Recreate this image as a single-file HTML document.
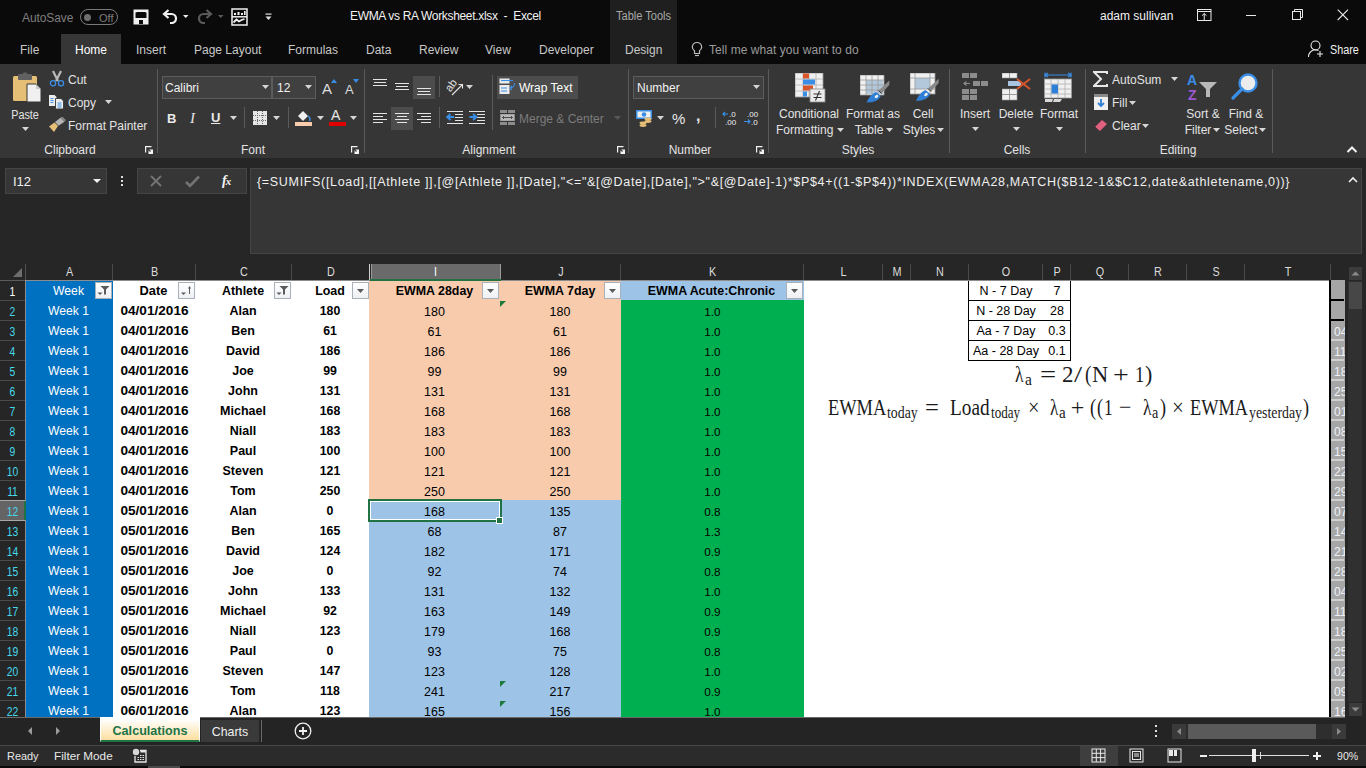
<!DOCTYPE html><html><head><meta charset="utf-8"><style>
*{margin:0;padding:0;box-sizing:border-box}
html,body{width:1366px;height:768px;overflow:hidden;background:#262626;font-family:"Liberation Sans",sans-serif}
.a{position:absolute}
.t{position:absolute;white-space:nowrap;line-height:1}
#title{left:0;top:0;width:1366px;height:64px;background:#0a0a0a}
#ribbon{left:0;top:64px;width:1366px;height:94px;background:#363636}
.ui{color:#e6e6e6;font-size:12px}
.sep{position:absolute;width:1px;background:#5a5a5a}
.lbl{position:absolute;color:#e0e0e0;font-size:12px;white-space:nowrap;line-height:1}
.dd{position:absolute;width:0;height:0;border-left:3px solid transparent;border-right:3px solid transparent;border-top:3px solid #d0d0d0}
.cell{position:absolute;white-space:nowrap;line-height:20px;height:20px;text-align:center;font-size:13px;color:#000}
.fb{position:absolute;width:17px;height:17px;background:linear-gradient(#ffffff,#eef0f4);border:1px solid #a9b0b8}
.ch{position:absolute;top:264px;height:16px;line-height:16px;text-align:center;color:#d6d6d6;font-size:12px;border-right:1px solid #4a4a4a}
.rh{position:absolute;left:0;width:25px;height:20px;line-height:20px;text-align:center;color:#5ad4e6;font-size:12px;border-bottom:1px solid #4a4a4a}
</style></head><body>
<div id="title" class="a"></div>
<div class="a" style="left:610px;top:0;width:67px;height:64px;background:#1f1f1f"></div>
<div class="t" style="left:22px;top:12px;font-size:12px;color:#7e7e7e;letter-spacing:-0.1px">AutoSave</div>
<div class="a" style="left:80px;top:9px;width:38px;height:16px;border:1px solid #7a7a7a;border-radius:8px"></div>
<div class="a" style="left:84px;top:13.5px;width:7px;height:7px;background:#6e6e6e;border-radius:50%"></div>
<div class="t" style="left:99px;top:13px;font-size:11px;color:#7a7a7a">Off</div>
<svg class="a" style="left:133px;top:9px" width="16" height="16" viewBox="0 0 16 16"><path d="M2 1.5 H14.5 V14.5 H1.5 V1.5z" fill="none" stroke="#f0f0f0" stroke-width="2"/><rect x="1" y="1" width="14" height="2.5" fill="#f0f0f0"/><rect x="3.5" y="3" width="9" height="5" fill="#0a0a0a"/><rect x="1" y="9" width="14" height="6" fill="#f0f0f0"/><rect x="6" y="11" width="4" height="4" fill="#0a0a0a"/></svg>
<svg class="a" style="left:162px;top:9px" width="28" height="15" viewBox="0 0 28 15"><path d="M2 5 H9.5 A4.5 4.5 0 0 1 9.5 14 H8" fill="none" stroke="#f0f0f0" stroke-width="2.2"/><path d="M6.5 1 L2 5 L6.5 9" fill="none" stroke="#f0f0f0" stroke-width="2.2"/><path d="M21 6 H26.5 L23.75 9z" fill="#f0f0f0"/></svg>
<svg class="a" style="left:197px;top:9px" width="28" height="15" viewBox="0 0 28 15"><path d="M14 5 H6.5 A4.5 4.5 0 0 0 6.5 14 H8" fill="none" stroke="#5a5a5a" stroke-width="2.2"/><path d="M9.5 1 L14 5 L9.5 9" fill="none" stroke="#5a5a5a" stroke-width="2.2"/><path d="M21 6 H26.5 L23.75 9z" fill="#5a5a5a"/></svg>
<svg class="a" style="left:231px;top:8px" width="17" height="18" viewBox="0 0 17 18"><rect x="1" y="1" width="15" height="16" fill="none" stroke="#f0f0f0" stroke-width="1.5"/><path d="M1 8.8 H16" stroke="#f0f0f0" stroke-width="1.5"/><rect x="3" y="5" width="2" height="2" fill="#f0f0f0"/><rect x="6.5" y="4" width="2" height="3" fill="#f0f0f0"/><rect x="10" y="5" width="2" height="2" fill="#f0f0f0"/><rect x="13" y="3" width="1.6" height="4" fill="#f0f0f0"/><path d="M2.5 14.5 L5.5 11.5 L8 13.5 L10.5 12 L13.5 11" stroke="#f0f0f0" stroke-width="1.8" fill="none"/></svg>
<svg class="a" style="left:265px;top:13px" width="7" height="8" viewBox="0 0 7 8"><rect x="0.5" y="0.5" width="6" height="1.2" fill="#e0e0e0"/><path d="M0.5 3.5 H6.5 L3.5 7z" fill="#e0e0e0"/></svg>
<div class="t" id="ttl" style="left:350px;top:10px;font-size:12px;color:#f2f2f2;letter-spacing:-0.33px">EWMA vs RA Worksheet.xlsx &nbsp;- &nbsp;Excel</div>
<div class="t" style="left:616px;top:10px;font-size:12px;color:#a8a8a8;transform:scaleX(0.92);transform-origin:0 0">Table Tools</div>
<div class="t" style="left:1100px;top:10px;font-size:12px;color:#f2f2f2">adam sullivan</div>
<svg class="a" style="left:1197px;top:9px" width="15" height="12" viewBox="0 0 15 12"><rect x="0.5" y="0.5" width="13.5" height="11" fill="none" stroke="#e8e8e8"/><line x1="0.5" y1="2.5" x2="14" y2="2.5" stroke="#e8e8e8"/><path d="M7.25 4.5 V11 M5 6.7 L7.25 4.5 L9.5 6.7" stroke="#e8e8e8" fill="none"/></svg>
<div class="a" style="left:1246px;top:15px;width:10px;height:1px;background:#e8e8e8"></div>
<svg class="a" style="left:1292px;top:9px" width="11" height="11" viewBox="0 0 11 11"><rect x="0.5" y="2.5" width="8" height="8" fill="none" stroke="#e8e8e8"/><path d="M2.5 2.5 V0.5 H10.5 V8.5 H8.5" fill="none" stroke="#e8e8e8"/></svg>
<svg class="a" style="left:1337px;top:9px" width="12" height="12" viewBox="0 0 12 12"><path d="M0.7 0.7 L11 11 M11 0.7 L0.7 11" stroke="#e8e8e8" stroke-width="1.1"/></svg>
<div class="a" style="left:61px;top:34px;width:60px;height:30px;background:#363636"></div>
<div class="t" style="left:20px;top:44px;font-size:12px;color:#c8c8c8">File</div>
<div class="t" style="left:75px;top:44px;font-size:12px;color:#ffffff">Home</div>
<div class="t" style="left:136px;top:44px;font-size:12px;color:#c8c8c8">Insert</div>
<div class="t" style="left:194px;top:44px;font-size:12px;color:#c8c8c8">Page Layout</div>
<div class="t" style="left:288px;top:44px;font-size:12px;color:#c8c8c8">Formulas</div>
<div class="t" style="left:366px;top:44px;font-size:12px;color:#c8c8c8">Data</div>
<div class="t" style="left:419px;top:44px;font-size:12px;color:#c8c8c8">Review</div>
<div class="t" style="left:485px;top:44px;font-size:12px;color:#c8c8c8">View</div>
<div class="t" style="left:539px;top:44px;font-size:12px;color:#c8c8c8">Developer</div>
<div class="t" style="left:625px;top:44px;font-size:12px;color:#c8c8c8">Design</div>
<svg class="a" style="left:691px;top:41px" width="12" height="17" viewBox="0 0 12 17"><path d="M6 1.5 A4.5 4.5 0 0 1 8.5 9.8 V12.5 H3.5 V9.8 A4.5 4.5 0 0 1 6 1.5z" fill="none" stroke="#bdbdbd" stroke-width="1.2"/><line x1="4" y1="14.5" x2="8" y2="14.5" stroke="#bdbdbd" stroke-width="1.2"/></svg>
<div class="t" style="left:709px;top:44px;font-size:12px;color:#9a9a9a;letter-spacing:0.06px">Tell me what you want to do</div>
<svg class="a" style="left:1307px;top:40px" width="18" height="18" viewBox="0 0 18 18"><circle cx="8.5" cy="5.5" r="4.5" fill="none" stroke="#e8e8e8" stroke-width="1.1"/><path d="M1.5 17 A7 7 0 0 1 11.5 10.5" fill="none" stroke="#e8e8e8" stroke-width="1.1"/><path d="M13 11 V17 M10 14 H16" stroke="#e8e8e8" stroke-width="1.1"/></svg>
<div class="t" style="left:1330px;top:44px;font-size:12px;color:#f2f2f2;transform:scaleX(0.9);transform-origin:0 0">Share</div>
<div id="ribbon" class="a"></div>
<div class="t" style="left:20.0px;top:144px;width:100px;text-align:center;font-size:12px;color:#e3e3e3">Clipboard</div>
<div class="t" style="left:203.0px;top:144px;width:100px;text-align:center;font-size:12px;color:#e3e3e3">Font</div>
<div class="t" style="left:439.0px;top:144px;width:100px;text-align:center;font-size:12px;color:#e3e3e3">Alignment</div>
<div class="t" style="left:640.0px;top:144px;width:100px;text-align:center;font-size:12px;color:#e3e3e3">Number</div>
<div class="t" style="left:808.0px;top:144px;width:100px;text-align:center;font-size:12px;color:#e3e3e3">Styles</div>
<div class="t" style="left:967.0px;top:144px;width:100px;text-align:center;font-size:12px;color:#e3e3e3">Cells</div>
<div class="t" style="left:1128.0px;top:144px;width:100px;text-align:center;font-size:12px;color:#e3e3e3">Editing</div>
<svg class="a" style="left:145px;top:146px" width="9" height="9" viewBox="0 0 9 9"><path d="M0.6 6.5 V0.6 H6.5" fill="none" stroke="#f4f4f4" stroke-width="1.2"/><rect x="3.5" y="3.5" width="4.5" height="4.5" fill="#f4f4f4"/><path d="M2.5 2.5 L5.5 5.5" stroke="#363636" stroke-width="1.2"/></svg>
<svg class="a" style="left:351px;top:146px" width="9" height="9" viewBox="0 0 9 9"><path d="M0.6 6.5 V0.6 H6.5" fill="none" stroke="#f4f4f4" stroke-width="1.2"/><rect x="3.5" y="3.5" width="4.5" height="4.5" fill="#f4f4f4"/><path d="M2.5 2.5 L5.5 5.5" stroke="#363636" stroke-width="1.2"/></svg>
<svg class="a" style="left:617px;top:146px" width="9" height="9" viewBox="0 0 9 9"><path d="M0.6 6.5 V0.6 H6.5" fill="none" stroke="#f4f4f4" stroke-width="1.2"/><rect x="3.5" y="3.5" width="4.5" height="4.5" fill="#f4f4f4"/><path d="M2.5 2.5 L5.5 5.5" stroke="#363636" stroke-width="1.2"/></svg>
<svg class="a" style="left:756px;top:146px" width="9" height="9" viewBox="0 0 9 9"><path d="M0.6 6.5 V0.6 H6.5" fill="none" stroke="#f4f4f4" stroke-width="1.2"/><rect x="3.5" y="3.5" width="4.5" height="4.5" fill="#f4f4f4"/><path d="M2.5 2.5 L5.5 5.5" stroke="#363636" stroke-width="1.2"/></svg>
<div class="sep" style="left:157px;top:69px;height:84px"></div>
<div class="sep" style="left:364px;top:69px;height:84px"></div>
<div class="sep" style="left:628px;top:69px;height:84px"></div>
<div class="sep" style="left:768px;top:69px;height:84px"></div>
<div class="sep" style="left:949px;top:69px;height:84px"></div>
<div class="sep" style="left:1085px;top:69px;height:84px"></div>
<div class="sep" style="left:1272px;top:69px;height:84px"></div>
<svg class="a" style="left:1346px;top:145px" width="12" height="8" viewBox="0 0 12 8"><path d="M1.5 7 L6 2.5 L10.5 7" fill="none" stroke="#f0f0f0" stroke-width="2"/></svg>
<svg class="a" style="left:11px;top:71px" width="32" height="33" viewBox="0 0 32 33"><rect x="2" y="5" width="24" height="25" rx="1.5" fill="#e6bf77"/><rect x="7" y="3" width="14" height="6" rx="1" fill="#606060"/><rect x="12" y="1.5" width="4" height="3" rx="1" fill="#606060"/><path d="M16 13 H25 L30 18 V31 H16z" fill="#f0f0f0" stroke="#363636" stroke-width="1"/><path d="M25 13 V18 H30" fill="#c8c8c8"/></svg>
<div class="t" style="left:5px;top:109px;width:40px;text-align:center;font-size:12px;color:#e3e3e3;transform:scaleX(0.9)">Paste</div>
<svg class="a" style="left:21.5px;top:127px" width="7" height="4" viewBox="0 0 7 4"><path d="M0 0 H7 L3.5 4z" fill="#d6d6d6"/></svg>
<svg class="a" style="left:49px;top:70px" width="16" height="17" viewBox="0 0 16 17"><path d="M4 1 L9 11 M12 1 L7 11" stroke="#b8b8b8" stroke-width="2.2"/><circle cx="4" cy="13.3" r="2.6" fill="none" stroke="#3a8ee6" stroke-width="1.3"/><circle cx="12" cy="13.3" r="2.6" fill="none" stroke="#3a8ee6" stroke-width="1.3"/></svg>
<div class="t" style="left:68px;top:74px;font-size:12px;color:#e3e3e3;">Cut</div>
<svg class="a" style="left:48px;top:94px" width="17" height="16" viewBox="0 0 17 16"><path d="M1 1 H6.5 L8.5 3 V12 H1z" fill="#ececec"/><path d="M2.5 4.5 H5.5 M2.5 6.5 H5.5 M2.5 8.5 H5.5" stroke="#3a8ee6" stroke-width="1"/><path d="M7.5 4.5 H13 L15.5 7 V15 H7.5z" fill="#ececec" stroke="#363636" stroke-width="0.9"/><path d="M9.5 9 H13.5 M9.5 11 H13.5 M9.5 13 H13.5" stroke="#3a8ee6" stroke-width="1"/></svg>
<div class="t" style="left:68px;top:97px;font-size:12px;color:#e3e3e3;">Copy</div>
<svg class="a" style="left:104.5px;top:100px" width="7" height="4" viewBox="0 0 7 4"><path d="M0 0 H7 L3.5 4z" fill="#d6d6d6"/></svg>
<svg class="a" style="left:48px;top:117px" width="18" height="16" viewBox="0 0 18 16"><path d="M1 9.5 L6.5 5.5 L10 9 L6 15z" fill="#e6bf77"/><path d="M7 5 L12.5 0.8 L16.5 4.8 L10.5 8.8z" fill="#b4b4b4"/><path d="M12.5 0.8 L14.2 -0.5 L17.8 3 L16.5 4.8z" fill="#8a8a8a"/></svg>
<div class="t" style="left:68px;top:120px;font-size:12px;color:#e3e3e3;">Format Painter</div>
<div class="a" style="left:162px;top:76px;width:110px;height:23px;background:#404040;border:1px solid #5c5c5c"></div>
<div class="a" style="left:272px;top:76px;width:44px;height:23px;background:#404040;border:1px solid #5c5c5c"></div>
<div class="t" style="left:165px;top:82px;font-size:12px;color:#f0f0f0;">Calibri</div>
<div class="t" style="left:277px;top:82px;font-size:12px;color:#f0f0f0;">12</div>
<svg class="a" style="left:261.5px;top:85px" width="7" height="4" viewBox="0 0 7 4"><path d="M0 0 H7 L3.5 4z" fill="#d6d6d6"/></svg>
<svg class="a" style="left:304.5px;top:85px" width="7" height="4" viewBox="0 0 7 4"><path d="M0 0 H7 L3.5 4z" fill="#d6d6d6"/></svg>
<div class="t" style="left:322px;top:81px;font-size:15px;color:#dcdcdc">A</div>
<svg class="a" style="left:331px;top:79px" width="6" height="4" viewBox="0 0 6 4"><path d="M0 4 H6 L3 0z" fill="#3a8ee6"/></svg>
<div class="t" style="left:345px;top:83px;font-size:13px;color:#dcdcdc">A</div>
<svg class="a" style="left:353px;top:79px" width="6" height="4" viewBox="0 0 6 4"><path d="M0 0 H6 L3 4z" fill="#3a8ee6"/></svg>
<div class="t" style="left:167px;top:112px;font-size:13px;font-weight:bold;color:#e8e8e8">B</div>
<div class="t" style="left:190px;top:111px;font-size:15px;font-style:italic;font-family:'Liberation Serif',serif;color:#e8e8e8">I</div>
<div class="t" style="left:211px;top:111px;font-size:13px;font-weight:bold;color:#e8e8e8;text-decoration:underline">U</div>
<svg class="a" style="left:229.5px;top:116px" width="7" height="4" viewBox="0 0 7 4"><path d="M0 0 H7 L3.5 4z" fill="#d6d6d6"/></svg>
<div class="sep" style="left:244px;top:107px;height:21px"></div>
<svg class="a" style="left:253px;top:111px" width="14" height="14" viewBox="0 0 14 14"><rect x="0" y="0" width="14" height="14" fill="#e6e6e6"/><path d="M4.5 0 V14 M9.5 0 V14 M0 4.5 H14 M0 9.5 H14" stroke="#6a6a6a" stroke-width="1" stroke-dasharray="1 1"/></svg>
<svg class="a" style="left:272.5px;top:116px" width="7" height="4" viewBox="0 0 7 4"><path d="M0 0 H7 L3.5 4z" fill="#d6d6d6"/></svg>
<div class="sep" style="left:288px;top:107px;height:21px"></div>
<svg class="a" style="left:295px;top:109px" width="17" height="18" viewBox="0 0 17 18"><path d="M3 7 L8 2 L13 7 L8 12z" fill="#f0f0f0"/><path d="M13 7 Q16 9 14.5 12" fill="none" stroke="#3a8ee6" stroke-width="1.5"/><rect x="0" y="13" width="17" height="4" fill="#f8cbad"/></svg>
<svg class="a" style="left:316.5px;top:116px" width="7" height="4" viewBox="0 0 7 4"><path d="M0 0 H7 L3.5 4z" fill="#d6d6d6"/></svg>
<div class="t" style="left:331px;top:108px;font-size:14px;color:#e8e8e8">A</div>
<div class="a" style="left:329px;top:122px;width:17px;height:4px;background:#e00000"></div>
<svg class="a" style="left:349.5px;top:116px" width="7" height="4" viewBox="0 0 7 4"><path d="M0 0 H7 L3.5 4z" fill="#d6d6d6"/></svg>
<div class="a" style="left:373px;top:79px;width:14px;height:1px;background:#e4e4e4"></div>
<div class="a" style="left:374px;top:82px;width:12px;height:1px;background:#e4e4e4"></div>
<div class="a" style="left:373px;top:85px;width:14px;height:1px;background:#e4e4e4"></div>
<div class="a" style="left:395px;top:83px;width:14px;height:1px;background:#e4e4e4"></div>
<div class="a" style="left:396px;top:86px;width:12px;height:1px;background:#e4e4e4"></div>
<div class="a" style="left:395px;top:89px;width:14px;height:1px;background:#e4e4e4"></div>
<div class="a" style="left:413px;top:76px;width:22px;height:23px;background:#4c4c4c"></div>
<div class="a" style="left:417px;top:88px;width:14px;height:1px;background:#e4e4e4"></div>
<div class="a" style="left:418px;top:91px;width:12px;height:1px;background:#e4e4e4"></div>
<div class="a" style="left:417px;top:94px;width:14px;height:1px;background:#e4e4e4"></div>
<div class="sep" style="left:439px;top:76px;height:21px"></div>
<svg class="a" style="left:446px;top:78px" width="20" height="19" viewBox="0 0 20 19"><text x="0" y="0" font-size="11" fill="#e4e4e4" font-family="Liberation Sans" transform="translate(4.5 14.5) rotate(-55)">ab</text><path d="M6 17 L16 7 M12.5 6.5 H16.5 V10.5" fill="none" stroke="#e4e4e4" stroke-width="1.1"/></svg>
<svg class="a" style="left:465.5px;top:85px" width="7" height="4" viewBox="0 0 7 4"><path d="M0 0 H7 L3.5 4z" fill="#d6d6d6"/></svg>
<div class="sep" style="left:492px;top:75px;height:55px"></div>
<div class="a" style="left:497px;top:76px;width:81px;height:23px;background:#4c4c4c"></div>
<svg class="a" style="left:499px;top:78px" width="17" height="17" viewBox="0 0 17 17"><rect x="0.5" y="0.5" width="10" height="5" fill="#ececec"/><path d="M2 2.5 H14" stroke="#3a8ee6" stroke-width="1.1"/><rect x="0.5" y="7" width="10" height="9" fill="#ececec"/><path d="M2 10 H8 M2 13 H8" stroke="#3a8ee6" stroke-width="1.1"/><path d="M15.5 5 Q15.5 10 11 10 M13 8 L11 10 L13 12" fill="none" stroke="#3a8ee6" stroke-width="1.1"/></svg>
<div class="t" style="left:519px;top:82px;font-size:12px;color:#ffffff;">Wrap Text</div>
<div class="a" style="left:373px;top:113px;width:14px;height:1px;background:#e4e4e4"></div>
<div class="a" style="left:373px;top:116px;width:10px;height:1px;background:#e4e4e4"></div>
<div class="a" style="left:373px;top:119px;width:14px;height:1px;background:#e4e4e4"></div>
<div class="a" style="left:373px;top:122px;width:10px;height:1px;background:#e4e4e4"></div>
<div class="a" style="left:391px;top:107px;width:22px;height:23px;background:#4c4c4c"></div>
<div class="a" style="left:395px;top:113px;width:14px;height:1px;background:#e4e4e4"></div>
<div class="a" style="left:397px;top:116px;width:10px;height:1px;background:#e4e4e4"></div>
<div class="a" style="left:395px;top:119px;width:14px;height:1px;background:#e4e4e4"></div>
<div class="a" style="left:397px;top:122px;width:10px;height:1px;background:#e4e4e4"></div>
<div class="a" style="left:417px;top:113px;width:14px;height:1px;background:#e4e4e4"></div>
<div class="a" style="left:421px;top:116px;width:10px;height:1px;background:#e4e4e4"></div>
<div class="a" style="left:417px;top:119px;width:14px;height:1px;background:#e4e4e4"></div>
<div class="a" style="left:421px;top:122px;width:10px;height:1px;background:#e4e4e4"></div>
<div class="sep" style="left:439px;top:107px;height:21px"></div>
<div class="a" style="left:447px;top:111px;width:16px;height:1px;background:#e4e4e4"></div>
<div class="a" style="left:455px;top:114px;width:8px;height:1px;background:#e4e4e4"></div>
<div class="a" style="left:455px;top:117px;width:8px;height:1px;background:#e4e4e4"></div>
<div class="a" style="left:455px;top:120px;width:8px;height:1px;background:#e4e4e4"></div>
<div class="a" style="left:447px;top:123px;width:16px;height:1px;background:#e4e4e4"></div>
<svg class="a" style="left:446px;top:113px" width="9" height="8" viewBox="0 0 9 8"><path d="M8 4 H2.5 M4.5 1 L1 4 L4.5 7" stroke="#3a8ee6" stroke-width="1.8" fill="none"/></svg>
<div class="a" style="left:469px;top:111px;width:16px;height:1px;background:#e4e4e4"></div>
<div class="a" style="left:477px;top:114px;width:8px;height:1px;background:#e4e4e4"></div>
<div class="a" style="left:477px;top:117px;width:8px;height:1px;background:#e4e4e4"></div>
<div class="a" style="left:477px;top:120px;width:8px;height:1px;background:#e4e4e4"></div>
<div class="a" style="left:469px;top:123px;width:16px;height:1px;background:#e4e4e4"></div>
<svg class="a" style="left:469px;top:113px" width="9" height="8" viewBox="0 0 9 8"><path d="M0.5 4 H6 M4 1 L7.5 4 L4 7" stroke="#3a8ee6" stroke-width="1.8" fill="none"/></svg>
<svg class="a" style="left:500px;top:110px" width="15" height="15" viewBox="0 0 15 15"><rect x="0" y="0" width="15" height="15" fill="#8c8c8c"/><path d="M7.5 0 V3 M7.5 12 V15 M0 3.5 H15 M0 11.5 H15" stroke="#363636" stroke-width="1"/><rect x="1" y="4.5" width="13" height="6" fill="#b8b8b8"/><path d="M2.5 7.5 H12.5 M4 6 L2.5 7.5 L4 9 M11 6 L12.5 7.5 L11 9" stroke="#4a4a4a" fill="none"/></svg>
<div class="t" style="left:519px;top:113px;font-size:12px;color:#7c7c7c;">Merge &amp; Center</div>
<svg class="a" style="left:613.5px;top:116px" width="7" height="4" viewBox="0 0 7 4"><path d="M0 0 H7 L3.5 4z" fill="#585858"/></svg>
<div class="a" style="left:633px;top:76px;width:131px;height:23px;background:#404040;border:1px solid #5c5c5c"></div>
<div class="t" style="left:637px;top:82px;font-size:12px;color:#f0f0f0;">Number</div>
<svg class="a" style="left:752.5px;top:85px" width="7" height="4" viewBox="0 0 7 4"><path d="M0 0 H7 L3.5 4z" fill="#d6d6d6"/></svg>
<svg class="a" style="left:636px;top:109px" width="17" height="18" viewBox="0 0 17 18"><rect x="0" y="1" width="16" height="9" fill="#3a8ee6"/><rect x="1.5" y="2.5" width="13" height="6" fill="#f0f0f0"/><circle cx="8" cy="5.5" r="2.3" fill="#3a8ee6"/><ellipse cx="12" cy="10" rx="3.5" ry="1.4" fill="#e6bf77"/><ellipse cx="12" cy="12.5" rx="3.5" ry="1.4" fill="#e6bf77"/><ellipse cx="7" cy="14" rx="3.5" ry="1.4" fill="#e6bf77"/><ellipse cx="7" cy="16.5" rx="3.5" ry="1.4" fill="#e6bf77"/></svg>
<svg class="a" style="left:656.5px;top:116px" width="7" height="4" viewBox="0 0 7 4"><path d="M0 0 H7 L3.5 4z" fill="#d6d6d6"/></svg>
<div class="t" style="left:672px;top:111px;font-size:15px;color:#e8e8e8">%</div>
<div class="t" style="left:696px;top:108px;font-size:16px;font-weight:bold;color:#e8e8e8">,</div>
<div class="sep" style="left:715px;top:107px;height:21px"></div>
<svg class="a" style="left:722px;top:110px" width="16" height="15" viewBox="0 0 16 15"><path d="M1 4 H6 M3 2 L1 4 L3 6" stroke="#3a8ee6" stroke-width="1.2" fill="none"/><text x="7" y="7" font-size="8" fill="#f0f0f0" font-family="Liberation Sans">.0</text><text x="3" y="14.5" font-size="8" fill="#f0f0f0" font-family="Liberation Sans">.00</text></svg>
<svg class="a" style="left:744px;top:110px" width="16" height="15" viewBox="0 0 16 15"><text x="3" y="7" font-size="8" fill="#f0f0f0" font-family="Liberation Sans">.00</text><path d="M0 11.5 H6 M4 9.5 L6 11.5 L4 13.5" stroke="#3a8ee6" stroke-width="1.2" fill="none"/><text x="7" y="14.5" font-size="8" fill="#f0f0f0" font-family="Liberation Sans">.0</text></svg>
<svg class="a" style="left:795px;top:73px" width="31" height="30" viewBox="0 0 31 30"><rect x="0" y="0" width="28" height="24" fill="#f0f0f0" stroke="#9a9a9a" stroke-width="0.8"/><path d="M0 6 H28 M0 12 H28 M0 18 H28 M8 0 V24 M14 0 V24 M21 0 V24" stroke="#b0b0b0" stroke-width="0.8"/><rect x="8" y="0.5" width="6" height="5" fill="#d9552b"/><rect x="8" y="6.5" width="12" height="5" fill="#3a8ee6"/><rect x="8" y="12.5" width="10" height="5" fill="#d9552b"/><rect x="8" y="18.5" width="4" height="5" fill="#3a8ee6"/><rect x="15" y="16" width="15" height="13" fill="#ececec" stroke="#8a8a8a" stroke-width="0.8"/><path d="M18.5 21 H26.5 M18.5 24.5 H26.5 M20.5 27.5 L24.5 18" stroke="#303030" stroke-width="1.1" fill="none"/></svg>
<div class="t" style="left:764.0px;top:108px;width:90px;text-align:center;font-size:12px;color:#e3e3e3">Conditional</div>
<div class="t" style="left:776px;top:124px;font-size:12px;color:#e3e3e3;">Formatting</div>
<svg class="a" style="left:836.5px;top:128px" width="7" height="4" viewBox="0 0 7 4"><path d="M0 0 H7 L3.5 4z" fill="#d6d6d6"/></svg>
<svg class="a" style="left:860px;top:75px" width="30" height="28" viewBox="0 0 30 28"><rect x="0" y="0" width="24" height="20" fill="#f0f0f0" stroke="#9a9a9a" stroke-width="0.8"/><rect x="6" y="5" width="17" height="14" fill="#b4c8dc"/><path d="M0 5 H24 M0 10 H24 M0 15 H24 M6 0 V20 M12 0 V20 M18 0 V20" stroke="#9a9a9a" stroke-width="0.8"/><path d="M29.3 5.5 V10 L21.5 18.5 L18.5 15.5z" fill="#8a8a8a"/><path d="M18.5 15.5 L21.5 18.5" stroke="#363636" stroke-width="1"/><path d="M6.6 27.6 Q9.5 20 16 17 L20.8 21 Q18 27.6 6.6 27.6z" fill="#2f7fd6"/><ellipse cx="16.5" cy="21.5" rx="2" ry="1.4" fill="#f0f0f0" transform="rotate(-40 16.5 21.5)"/></svg>
<div class="t" style="left:833.0px;top:108px;width:80px;text-align:center;font-size:12px;color:#e3e3e3">Format as</div>
<div class="t" style="left:839.0px;top:124px;width:60px;text-align:center;font-size:12px;color:#e3e3e3">Table</div>
<svg class="a" style="left:885.5px;top:128px" width="7" height="4" viewBox="0 0 7 4"><path d="M0 0 H7 L3.5 4z" fill="#d6d6d6"/></svg>
<svg class="a" style="left:910px;top:73px" width="30" height="29" viewBox="0 0 30 29"><rect x="0" y="0" width="25" height="21" fill="#f0f0f0" stroke="#9a9a9a" stroke-width="0.8"/><rect x="5" y="5" width="15" height="11" fill="#b4c8dc"/><path d="M0 5 H25 M0 16 H25 M5 0 V21 M20 0 V21" stroke="#9a9a9a" stroke-width="0.8"/><path d="M28.7 5.8 V10 L21 18.5 L18 15.5z" fill="#8a8a8a"/><path d="M18 15.5 L21 18.5" stroke="#363636" stroke-width="1"/><path d="M6 27.9 Q9 20 15.5 17 L20.2 21 Q17.5 27.9 6 27.9z" fill="#2f7fd6"/><ellipse cx="16" cy="21.5" rx="2" ry="1.4" fill="#f0f0f0" transform="rotate(-40 16 21.5)"/></svg>
<div class="t" style="left:903.0px;top:108px;width:40px;text-align:center;font-size:12px;color:#e3e3e3">Cell</div>
<div class="t" style="left:894.0px;top:124px;width:50px;text-align:center;font-size:12px;color:#e3e3e3">Styles</div>
<svg class="a" style="left:936.5px;top:128px" width="7" height="4" viewBox="0 0 7 4"><path d="M0 0 H7 L3.5 4z" fill="#d6d6d6"/></svg>
<svg class="a" style="left:962px;top:73px" width="27" height="28" viewBox="0 0 27 28"><rect x="0" y="0" width="15" height="5" fill="#8c8c8c"/><path d="M7.5 0 V5" stroke="#363636"/><rect x="11" y="8" width="15" height="5" fill="#8c8c8c"/><path d="M18.5 8 V13" stroke="#363636"/><path d="M2 10.5 H8 M4.5 8.5 L2 10.5 L4.5 12.5" stroke="#8c8c8c" stroke-width="1.2" fill="none"/><rect x="0" y="16" width="15" height="11" fill="#8c8c8c"/><path d="M7.5 16 V27 M0 21.5 H15" stroke="#363636"/></svg>
<div class="t" style="left:945.0px;top:108px;width:60px;text-align:center;font-size:12px;color:#e3e3e3">Insert</div>
<svg class="a" style="left:971.5px;top:127px" width="7" height="4" viewBox="0 0 7 4"><path d="M0 0 H7 L3.5 4z" fill="#d6d6d6"/></svg>
<svg class="a" style="left:1002px;top:73px" width="32" height="28" viewBox="0 0 32 28"><rect x="0" y="0" width="15" height="5" fill="#f0f0f0" stroke="#9a9a9a" stroke-width="0.6"/><path d="M7.5 0 V5" stroke="#9a9a9a"/><rect x="6" y="8" width="13" height="5" fill="#a8c4e0"/><rect x="0" y="16" width="15" height="11" fill="#f0f0f0" stroke="#9a9a9a" stroke-width="0.6"/><path d="M7.5 16 V27 M0 21.5 H15" stroke="#9a9a9a"/><path d="M15 6 L28 16 M28 6 L15 16" stroke="#d9552b" stroke-width="2"/></svg>
<div class="t" style="left:986.0px;top:108px;width:60px;text-align:center;font-size:12px;color:#e3e3e3">Delete</div>
<svg class="a" style="left:1012.5px;top:127px" width="7" height="4" viewBox="0 0 7 4"><path d="M0 0 H7 L3.5 4z" fill="#d6d6d6"/></svg>
<svg class="a" style="left:1044px;top:72px" width="29" height="31" viewBox="0 0 29 31"><path d="M1 3 H27 M1 0.5 V5.5 M27 0.5 V5.5 M4 1 L1 3 L4 5 M24 1 L27 3 L24 5" stroke="#3a8ee6" stroke-width="1.1" fill="none"/><rect x="0.5" y="7" width="27" height="19" fill="#f0f0f0" stroke="#9a9a9a" stroke-width="0.8"/><path d="M0.5 12 H27.5 M0.5 17 H27.5 M0.5 22 H27.5 M7 7 V26 M14 7 V26 M21 7 V26" stroke="#b0b0b0" stroke-width="0.8"/><rect x="7.5" y="12.5" width="6.5" height="9" fill="#2f7fd6"/><path d="M1 27 H9 L8 30 H1z M10 27 H18 L16 30 H9z" fill="#d8d8d8"/></svg>
<div class="t" style="left:1029.0px;top:108px;width:60px;text-align:center;font-size:12px;color:#e3e3e3">Format</div>
<svg class="a" style="left:1055.5px;top:127px" width="7" height="4" viewBox="0 0 7 4"><path d="M0 0 H7 L3.5 4z" fill="#d6d6d6"/></svg>
<svg class="a" style="left:1093px;top:71px" width="15" height="16" viewBox="0 0 15 16"><path d="M14 3 V1 H1 L8 8 L1 15 H14 V13" fill="none" stroke="#e8e8e8" stroke-width="2"/></svg>
<div class="t" style="left:1112px;top:74px;font-size:12px;color:#e3e3e3;">AutoSum</div>
<svg class="a" style="left:1170.5px;top:77px" width="7" height="4" viewBox="0 0 7 4"><path d="M0 0 H7 L3.5 4z" fill="#d6d6d6"/></svg>
<svg class="a" style="left:1094px;top:94px" width="14" height="16" viewBox="0 0 14 16"><rect x="0" y="0" width="14" height="16" fill="#f0f0f0"/><rect x="0" y="0" width="14" height="3" fill="#8a8a8a"/><path d="M7 5 V12 M4 9 L7 12 L10 9" stroke="#2f7fd6" stroke-width="1.8" fill="none"/></svg>
<div class="t" style="left:1112px;top:97px;font-size:12px;color:#e3e3e3;">Fill</div>
<svg class="a" style="left:1128.5px;top:101px" width="7" height="4" viewBox="0 0 7 4"><path d="M0 0 H7 L3.5 4z" fill="#d6d6d6"/></svg>
<svg class="a" style="left:1094px;top:118px" width="14" height="14" viewBox="0 0 14 14"><path d="M1 9 L8 2 L13 6 L6 13z" fill="#e0607e"/><path d="M1 9 L4 12" stroke="#363636"/></svg>
<div class="t" style="left:1112px;top:120px;font-size:12px;color:#e3e3e3;">Clear</div>
<svg class="a" style="left:1141.5px;top:124px" width="7" height="4" viewBox="0 0 7 4"><path d="M0 0 H7 L3.5 4z" fill="#d6d6d6"/></svg>
<svg class="a" style="left:1187px;top:73px" width="31" height="28" viewBox="0 0 31 28"><text x="0" y="12" font-size="14" font-weight="bold" font-family="Liberation Sans" fill="#3a8ee6">A</text><text x="1" y="27" font-size="14" font-weight="bold" font-family="Liberation Sans" fill="#9b59d0">Z</text><path d="M12 9 H30 L23 16 V24 H19 V16z" fill="#b8b8b8"/></svg>
<div class="t" style="left:1178.0px;top:108px;width:50px;text-align:center;font-size:12px;color:#e3e3e3">Sort &amp;</div>
<div class="t" style="left:1173.0px;top:124px;width:50px;text-align:center;font-size:12px;color:#e3e3e3">Filter</div>
<svg class="a" style="left:1212.5px;top:128px" width="7" height="4" viewBox="0 0 7 4"><path d="M0 0 H7 L3.5 4z" fill="#d6d6d6"/></svg>
<svg class="a" style="left:1231px;top:72px" width="29" height="29" viewBox="0 0 29 29"><circle cx="17" cy="11" r="8.5" fill="#ececec" stroke="#3a8ee6" stroke-width="2.4"/><path d="M11 17 L2 26" stroke="#3a8ee6" stroke-width="3.2" stroke-linecap="round"/></svg>
<div class="t" style="left:1221.0px;top:108px;width:50px;text-align:center;font-size:12px;color:#e3e3e3">Find &amp;</div>
<div class="t" style="left:1216.0px;top:124px;width:50px;text-align:center;font-size:12px;color:#e3e3e3">Select</div>
<svg class="a" style="left:1258.5px;top:128px" width="7" height="4" viewBox="0 0 7 4"><path d="M0 0 H7 L3.5 4z" fill="#d6d6d6"/></svg>
<div class="a" style="left:5px;top:168px;width:102px;height:26px;background:#363636;border:1px solid #454545"></div>
<div class="t" style="left:13px;top:175px;font-size:13px;color:#f0f0f0">I12</div>
<div class="dd" style="left:93px;top:179px;border-left-width:4px;border-right-width:4px;border-top-width:4px;border-top-color:#f0f0f0"></div>
<div class="a" style="left:121px;top:176px;width:2px;height:2px;background:#e0e0e0"></div>
<div class="a" style="left:121px;top:180px;width:2px;height:2px;background:#e0e0e0"></div>
<div class="a" style="left:121px;top:184px;width:2px;height:2px;background:#e0e0e0"></div>
<div class="a" style="left:137px;top:168px;width:110px;height:26px;background:#363636;border:1px solid #454545"></div>
<svg class="a" style="left:150px;top:175px" width="12" height="12" viewBox="0 0 12 12"><path d="M1 1 L11 11 M11 1 L1 11" stroke="#747474" stroke-width="1.8"/></svg>
<svg class="a" style="left:185px;top:175px" width="15" height="13" viewBox="0 0 15 13"><path d="M1 7 L5 11 L14 1.5" fill="none" stroke="#747474" stroke-width="2.6"/></svg>
<div class="t" style="left:222px;top:174px;font-size:14px;font-family:'Liberation Serif',serif;font-style:italic;font-weight:bold;color:#f4f4f4">f<span style="font-size:11px;margin-left:-1px">x</span></div>
<div class="a" style="left:250px;top:168px;width:1112px;height:86px;background:#363636;border:1px solid #454545"></div>
<div class="t" id="formula" style="left:257px;top:175.5px;font-size:12.5px;letter-spacing:0.675px;color:#f0f0f0">{=SUMIFS([Load],[[Athlete ]],[@[Athlete ]],[Date],"&lt;="&amp;[@Date],[Date],"&gt;"&amp;[@Date]-1)*$P$4+((1-$P$4))*INDEX(EWMA28,MATCH($B12-1&amp;$C12,date&amp;athletename,0))}</div>
<svg class="a" style="left:1348px;top:176px" width="10" height="7" viewBox="0 0 10 7"><path d="M1 6 L5 2 L9 6" fill="none" stroke="#f0f0f0" stroke-width="1.6"/></svg>
<div class="a" style="left:26px;top:281px;width:1305px;height:436px;background:#ffffff"></div>
<div class="a" style="left:0;top:264px;width:1345px;height:17px;background:#262626"></div>
<div class="a" style="left:0;top:280px;width:25px;height:1px;background:#5c5c5c"></div>
<div class="a" style="left:25px;top:280px;width:1306px;height:1px;background:#8c8c8c"></div>
<svg class="a" style="left:13px;top:268px" width="9" height="9" viewBox="0 0 9 9"><path d="M9 0 L9 9 L0 9z" fill="#6e6e6e"/></svg>
<div class="a" style="left:25px;top:264px;width:1px;height:16px;background:#505050"></div>
<div class="a" style="left:25px;top:280px;width:1px;height:437px;background:#8c8c8c"></div>
<div class="a" style="left:112px;top:264px;width:1px;height:16px;background:#4a4a4a"></div>
<div class="t" style="left:26px;top:266px;width:87px;text-align:center;font-size:12px;color:#dcdcdc;transform:scaleX(0.9)">A</div>
<div class="a" style="left:195px;top:264px;width:1px;height:16px;background:#4a4a4a"></div>
<div class="t" style="left:113px;top:266px;width:83px;text-align:center;font-size:12px;color:#dcdcdc;transform:scaleX(0.9)">B</div>
<div class="a" style="left:291px;top:264px;width:1px;height:16px;background:#4a4a4a"></div>
<div class="t" style="left:196px;top:266px;width:96px;text-align:center;font-size:12px;color:#dcdcdc;transform:scaleX(0.9)">C</div>
<div class="a" style="left:369px;top:264px;width:1px;height:16px;background:#4a4a4a"></div>
<div class="t" style="left:292px;top:266px;width:78px;text-align:center;font-size:12px;color:#dcdcdc;transform:scaleX(0.9)">D</div>
<div class="a" style="left:371px;top:264px;width:130px;height:16px;background:#6a6a6a;border-left:1px solid #9a9a9a;border-right:1px solid #9a9a9a"></div>
<div class="a" style="left:370px;top:279px;width:131px;height:2px;background:#217346"></div>
<div class="a" style="left:369px;top:264px;width:1px;height:16px;background:#d0d0d0"></div>
<div class="t" style="left:370px;top:266px;width:131px;text-align:center;font-size:12px;color:#ffffff;transform:scaleX(0.9)">I</div>
<div class="a" style="left:620px;top:264px;width:1px;height:16px;background:#4a4a4a"></div>
<div class="t" style="left:501px;top:266px;width:120px;text-align:center;font-size:12px;color:#dcdcdc;transform:scaleX(0.9)">J</div>
<div class="a" style="left:803px;top:264px;width:1px;height:16px;background:#4a4a4a"></div>
<div class="t" style="left:621px;top:266px;width:183px;text-align:center;font-size:12px;color:#dcdcdc;transform:scaleX(0.9)">K</div>
<div class="a" style="left:882px;top:264px;width:1px;height:16px;background:#4a4a4a"></div>
<div class="t" style="left:804px;top:266px;width:79px;text-align:center;font-size:12px;color:#dcdcdc;transform:scaleX(0.9)">L</div>
<div class="a" style="left:910px;top:264px;width:1px;height:16px;background:#4a4a4a"></div>
<div class="t" style="left:883px;top:266px;width:28px;text-align:center;font-size:12px;color:#dcdcdc;transform:scaleX(0.9)">M</div>
<div class="a" style="left:968px;top:264px;width:1px;height:16px;background:#4a4a4a"></div>
<div class="t" style="left:911px;top:266px;width:58px;text-align:center;font-size:12px;color:#dcdcdc;transform:scaleX(0.9)">N</div>
<div class="a" style="left:1042px;top:264px;width:1px;height:16px;background:#4a4a4a"></div>
<div class="t" style="left:969px;top:266px;width:74px;text-align:center;font-size:12px;color:#dcdcdc;transform:scaleX(0.9)">O</div>
<div class="a" style="left:1070px;top:264px;width:1px;height:16px;background:#4a4a4a"></div>
<div class="t" style="left:1043px;top:266px;width:28px;text-align:center;font-size:12px;color:#dcdcdc;transform:scaleX(0.9)">P</div>
<div class="a" style="left:1128px;top:264px;width:1px;height:16px;background:#4a4a4a"></div>
<div class="t" style="left:1071px;top:266px;width:58px;text-align:center;font-size:12px;color:#dcdcdc;transform:scaleX(0.9)">Q</div>
<div class="a" style="left:1186px;top:264px;width:1px;height:16px;background:#4a4a4a"></div>
<div class="t" style="left:1129px;top:266px;width:58px;text-align:center;font-size:12px;color:#dcdcdc;transform:scaleX(0.9)">R</div>
<div class="a" style="left:1244px;top:264px;width:1px;height:16px;background:#4a4a4a"></div>
<div class="t" style="left:1187px;top:266px;width:58px;text-align:center;font-size:12px;color:#dcdcdc;transform:scaleX(0.9)">S</div>
<div class="a" style="left:1330px;top:264px;width:1px;height:16px;background:#4a4a4a"></div>
<div class="t" style="left:1245px;top:266px;width:86px;text-align:center;font-size:12px;color:#dcdcdc;transform:scaleX(0.9)">T</div>
<div class="a" style="left:26px;top:281px;width:87px;height:436px;background:#0070c0"></div>
<div class="a" style="left:369px;top:281px;width:252px;height:219px;background:#f8cbad"></div>
<div class="a" style="left:369px;top:500px;width:252px;height:217px;background:#9dc3e6"></div>
<div class="a" style="left:621px;top:281px;width:183px;height:19px;background:#9dc3e6"></div>
<div class="a" style="left:621px;top:300px;width:183px;height:417px;background:#00b050"></div>
<div class="a" style="left:0;top:281px;width:25px;height:20px;background:#262626;overflow:hidden"><div class="t" style="left:0;top:5px;width:25px;text-align:center;font-size:12px;color:#ffffff;transform:scaleX(0.86)">1</div></div>
<div class="a" style="left:0;top:300px;width:25px;height:1px;background:#4a4a4a"></div>
<div class="a" style="left:0;top:301px;width:25px;height:20px;background:#262626;overflow:hidden"><div class="t" style="left:0;top:5px;width:25px;text-align:center;font-size:12px;color:#45d9ec;transform:scaleX(0.86)">2</div></div>
<div class="a" style="left:0;top:320px;width:25px;height:1px;background:#4a4a4a"></div>
<div class="a" style="left:0;top:321px;width:25px;height:20px;background:#262626;overflow:hidden"><div class="t" style="left:0;top:5px;width:25px;text-align:center;font-size:12px;color:#45d9ec;transform:scaleX(0.86)">3</div></div>
<div class="a" style="left:0;top:340px;width:25px;height:1px;background:#4a4a4a"></div>
<div class="a" style="left:0;top:341px;width:25px;height:20px;background:#262626;overflow:hidden"><div class="t" style="left:0;top:5px;width:25px;text-align:center;font-size:12px;color:#45d9ec;transform:scaleX(0.86)">4</div></div>
<div class="a" style="left:0;top:360px;width:25px;height:1px;background:#4a4a4a"></div>
<div class="a" style="left:0;top:361px;width:25px;height:20px;background:#262626;overflow:hidden"><div class="t" style="left:0;top:5px;width:25px;text-align:center;font-size:12px;color:#45d9ec;transform:scaleX(0.86)">5</div></div>
<div class="a" style="left:0;top:380px;width:25px;height:1px;background:#4a4a4a"></div>
<div class="a" style="left:0;top:381px;width:25px;height:20px;background:#262626;overflow:hidden"><div class="t" style="left:0;top:5px;width:25px;text-align:center;font-size:12px;color:#45d9ec;transform:scaleX(0.86)">6</div></div>
<div class="a" style="left:0;top:400px;width:25px;height:1px;background:#4a4a4a"></div>
<div class="a" style="left:0;top:401px;width:25px;height:20px;background:#262626;overflow:hidden"><div class="t" style="left:0;top:5px;width:25px;text-align:center;font-size:12px;color:#45d9ec;transform:scaleX(0.86)">7</div></div>
<div class="a" style="left:0;top:420px;width:25px;height:1px;background:#4a4a4a"></div>
<div class="a" style="left:0;top:421px;width:25px;height:20px;background:#262626;overflow:hidden"><div class="t" style="left:0;top:5px;width:25px;text-align:center;font-size:12px;color:#45d9ec;transform:scaleX(0.86)">8</div></div>
<div class="a" style="left:0;top:440px;width:25px;height:1px;background:#4a4a4a"></div>
<div class="a" style="left:0;top:441px;width:25px;height:20px;background:#262626;overflow:hidden"><div class="t" style="left:0;top:5px;width:25px;text-align:center;font-size:12px;color:#45d9ec;transform:scaleX(0.86)">9</div></div>
<div class="a" style="left:0;top:460px;width:25px;height:1px;background:#4a4a4a"></div>
<div class="a" style="left:0;top:461px;width:25px;height:20px;background:#262626;overflow:hidden"><div class="t" style="left:0;top:5px;width:25px;text-align:center;font-size:12px;color:#45d9ec;transform:scaleX(0.86)">10</div></div>
<div class="a" style="left:0;top:480px;width:25px;height:1px;background:#4a4a4a"></div>
<div class="a" style="left:0;top:481px;width:25px;height:20px;background:#262626;overflow:hidden"><div class="t" style="left:0;top:5px;width:25px;text-align:center;font-size:12px;color:#45d9ec;transform:scaleX(0.86)">11</div></div>
<div class="a" style="left:0;top:500px;width:25px;height:1px;background:#4a4a4a"></div>
<div class="a" style="left:0;top:501px;width:25px;height:20px;background:#646464;overflow:hidden"><div class="t" style="left:0;top:5px;width:25px;text-align:center;font-size:12px;color:#45d9ec;transform:scaleX(0.86)">12</div></div>
<div class="a" style="left:0;top:520px;width:25px;height:1px;background:#4a4a4a"></div>
<div class="a" style="left:0;top:521px;width:25px;height:20px;background:#262626;overflow:hidden"><div class="t" style="left:0;top:5px;width:25px;text-align:center;font-size:12px;color:#45d9ec;transform:scaleX(0.86)">13</div></div>
<div class="a" style="left:0;top:540px;width:25px;height:1px;background:#4a4a4a"></div>
<div class="a" style="left:0;top:541px;width:25px;height:20px;background:#262626;overflow:hidden"><div class="t" style="left:0;top:5px;width:25px;text-align:center;font-size:12px;color:#45d9ec;transform:scaleX(0.86)">14</div></div>
<div class="a" style="left:0;top:560px;width:25px;height:1px;background:#4a4a4a"></div>
<div class="a" style="left:0;top:561px;width:25px;height:20px;background:#262626;overflow:hidden"><div class="t" style="left:0;top:5px;width:25px;text-align:center;font-size:12px;color:#45d9ec;transform:scaleX(0.86)">15</div></div>
<div class="a" style="left:0;top:580px;width:25px;height:1px;background:#4a4a4a"></div>
<div class="a" style="left:0;top:581px;width:25px;height:20px;background:#262626;overflow:hidden"><div class="t" style="left:0;top:5px;width:25px;text-align:center;font-size:12px;color:#45d9ec;transform:scaleX(0.86)">16</div></div>
<div class="a" style="left:0;top:600px;width:25px;height:1px;background:#4a4a4a"></div>
<div class="a" style="left:0;top:601px;width:25px;height:20px;background:#262626;overflow:hidden"><div class="t" style="left:0;top:5px;width:25px;text-align:center;font-size:12px;color:#45d9ec;transform:scaleX(0.86)">17</div></div>
<div class="a" style="left:0;top:620px;width:25px;height:1px;background:#4a4a4a"></div>
<div class="a" style="left:0;top:621px;width:25px;height:20px;background:#262626;overflow:hidden"><div class="t" style="left:0;top:5px;width:25px;text-align:center;font-size:12px;color:#45d9ec;transform:scaleX(0.86)">18</div></div>
<div class="a" style="left:0;top:640px;width:25px;height:1px;background:#4a4a4a"></div>
<div class="a" style="left:0;top:641px;width:25px;height:20px;background:#262626;overflow:hidden"><div class="t" style="left:0;top:5px;width:25px;text-align:center;font-size:12px;color:#45d9ec;transform:scaleX(0.86)">19</div></div>
<div class="a" style="left:0;top:660px;width:25px;height:1px;background:#4a4a4a"></div>
<div class="a" style="left:0;top:661px;width:25px;height:20px;background:#262626;overflow:hidden"><div class="t" style="left:0;top:5px;width:25px;text-align:center;font-size:12px;color:#45d9ec;transform:scaleX(0.86)">20</div></div>
<div class="a" style="left:0;top:680px;width:25px;height:1px;background:#4a4a4a"></div>
<div class="a" style="left:0;top:681px;width:25px;height:20px;background:#262626;overflow:hidden"><div class="t" style="left:0;top:5px;width:25px;text-align:center;font-size:12px;color:#45d9ec;transform:scaleX(0.86)">21</div></div>
<div class="a" style="left:0;top:700px;width:25px;height:1px;background:#4a4a4a"></div>
<div class="a" style="left:0;top:701px;width:25px;height:16px;background:#262626;overflow:hidden"><div class="t" style="left:0;top:5px;width:25px;text-align:center;font-size:12px;color:#45d9ec;transform:scaleX(0.86)">22</div></div>
<div class="a" style="left:0;top:500px;width:25px;height:1px;background:#a8a8a8"></div>
<div class="a" style="left:0;top:520px;width:25px;height:1px;background:#a8a8a8"></div>
<div class="a" style="left:24px;top:501px;width:2px;height:19px;background:#217346"></div>
<div class="t hd" style="left:25px;top:284px;width:87px;text-align:center;font-size:13px;font-weight:normal;color:#ffffff;transform:scaleX(0.94)">Week</div>
<div class="t hd" style="left:112px;top:284px;width:83px;text-align:center;font-size:13px;font-weight:bold;color:#000;transform:scaleX(0.99)">Date</div>
<div class="t hd" style="left:195px;top:284px;width:96px;text-align:center;font-size:13px;font-weight:bold;color:#000;transform:scaleX(0.955)">Athlete</div>
<div class="t hd" style="left:291px;top:284px;width:78px;text-align:center;font-size:13px;font-weight:bold;color:#000;transform:scaleX(0.955)">Load</div>
<div class="t hd" style="left:369px;top:284px;width:131px;text-align:center;font-size:13px;font-weight:bold;color:#000;transform:scaleX(0.955)">EWMA 28day</div>
<div class="t hd" style="left:500px;top:284px;width:120px;text-align:center;font-size:13px;font-weight:bold;color:#000;transform:scaleX(0.955)">EWMA 7day</div>
<div class="t hd" style="left:620px;top:284px;width:183px;text-align:center;font-size:13px;font-weight:bold;color:#000;transform:scaleX(0.955)">EWMA Acute:Chronic</div>
<div class="fb" style="left:95px;top:282px"></div>
<svg class="a" style="left:95px;top:282px" width="17" height="17" viewBox="0 0 17 17"><path d="M5.5 4 H14.5 L11 7.5 V12.5 H9 V7.5z" fill="#5a5a5a"/><path d="M2.5 10.5 H7.5 L5 13z" fill="#5a5a5a"/></svg>
<div class="fb" style="left:178px;top:282px"></div>
<svg class="a" style="left:178px;top:282px" width="17" height="17" viewBox="0 0 17 17"><path d="M3 10.5 H8 L5.5 13z" fill="#5a5a5a"/><path d="M11.5 5 V12" stroke="#5a5a5a" stroke-width="1"/><path d="M10 6.5 L11.5 4 L13 6.5z" fill="#5a5a5a"/></svg>
<div class="fb" style="left:274px;top:282px"></div>
<svg class="a" style="left:274px;top:282px" width="17" height="17" viewBox="0 0 17 17"><path d="M5.5 4 H14.5 L11 7.5 V12.5 H9 V7.5z" fill="#5a5a5a"/><path d="M2.5 10.5 H7.5 L5 13z" fill="#5a5a5a"/></svg>
<div class="fb" style="left:352px;top:282px"></div>
<svg class="a" style="left:352px;top:282px" width="17" height="17" viewBox="0 0 17 17"><path d="M5 7 L12 7 L8.5 11z" fill="#5a5a5a"/></svg>
<div class="fb" style="left:482px;top:282px"></div>
<svg class="a" style="left:482px;top:282px" width="17" height="17" viewBox="0 0 17 17"><path d="M5 7 L12 7 L8.5 11z" fill="#5a5a5a"/></svg>
<div class="fb" style="left:604px;top:282px"></div>
<svg class="a" style="left:604px;top:282px" width="17" height="17" viewBox="0 0 17 17"><path d="M5 7 L12 7 L8.5 11z" fill="#5a5a5a"/></svg>
<div class="fb" style="left:786px;top:282px"></div>
<svg class="a" style="left:786px;top:282px" width="17" height="17" viewBox="0 0 17 17"><path d="M5 7 L12 7 L8.5 11z" fill="#5a5a5a"/></svg>
<div class="t" style="left:25px;top:304px;width:87px;text-align:center;font-size:13px;color:#fff;transform:scaleX(0.935)">Week 1</div>
<div class="t" style="left:113px;top:304px;width:83px;text-align:center;font-size:13px;font-weight:bold;color:#000;transform:scaleX(1.046)">04/01/2016</div>
<div class="t" style="left:195px;top:304px;width:96px;text-align:center;font-size:13px;font-weight:bold;color:#000;transform:scaleX(0.96)">Alan</div>
<div class="t" style="left:291px;top:304px;width:78px;text-align:center;font-size:13px;font-weight:bold;color:#000;transform:scaleX(0.945)">180</div>
<div class="t" style="left:369px;top:305px;width:131px;text-align:center;font-size:13px;color:#000;transform:scaleX(0.96)">180</div>
<div class="t" style="left:500px;top:305px;width:120px;text-align:center;font-size:13px;color:#000;transform:scaleX(0.96)">180</div>
<div class="t" style="left:621px;top:307px;width:183px;text-align:center;font-size:11.5px;color:#000;transform:scaleX(1.02)">1.0</div>
<div class="t" style="left:25px;top:324px;width:87px;text-align:center;font-size:13px;color:#fff;transform:scaleX(0.935)">Week 1</div>
<div class="t" style="left:113px;top:324px;width:83px;text-align:center;font-size:13px;font-weight:bold;color:#000;transform:scaleX(1.046)">04/01/2016</div>
<div class="t" style="left:195px;top:324px;width:96px;text-align:center;font-size:13px;font-weight:bold;color:#000;transform:scaleX(0.96)">Ben</div>
<div class="t" style="left:291px;top:324px;width:78px;text-align:center;font-size:13px;font-weight:bold;color:#000;transform:scaleX(0.945)">61</div>
<div class="t" style="left:369px;top:325px;width:131px;text-align:center;font-size:13px;color:#000;transform:scaleX(0.96)">61</div>
<div class="t" style="left:500px;top:325px;width:120px;text-align:center;font-size:13px;color:#000;transform:scaleX(0.96)">61</div>
<div class="t" style="left:621px;top:327px;width:183px;text-align:center;font-size:11.5px;color:#000;transform:scaleX(1.02)">1.0</div>
<div class="t" style="left:25px;top:344px;width:87px;text-align:center;font-size:13px;color:#fff;transform:scaleX(0.935)">Week 1</div>
<div class="t" style="left:113px;top:344px;width:83px;text-align:center;font-size:13px;font-weight:bold;color:#000;transform:scaleX(1.046)">04/01/2016</div>
<div class="t" style="left:195px;top:344px;width:96px;text-align:center;font-size:13px;font-weight:bold;color:#000;transform:scaleX(0.96)">David</div>
<div class="t" style="left:291px;top:344px;width:78px;text-align:center;font-size:13px;font-weight:bold;color:#000;transform:scaleX(0.945)">186</div>
<div class="t" style="left:369px;top:345px;width:131px;text-align:center;font-size:13px;color:#000;transform:scaleX(0.96)">186</div>
<div class="t" style="left:500px;top:345px;width:120px;text-align:center;font-size:13px;color:#000;transform:scaleX(0.96)">186</div>
<div class="t" style="left:621px;top:347px;width:183px;text-align:center;font-size:11.5px;color:#000;transform:scaleX(1.02)">1.0</div>
<div class="t" style="left:25px;top:364px;width:87px;text-align:center;font-size:13px;color:#fff;transform:scaleX(0.935)">Week 1</div>
<div class="t" style="left:113px;top:364px;width:83px;text-align:center;font-size:13px;font-weight:bold;color:#000;transform:scaleX(1.046)">04/01/2016</div>
<div class="t" style="left:195px;top:364px;width:96px;text-align:center;font-size:13px;font-weight:bold;color:#000;transform:scaleX(0.96)">Joe</div>
<div class="t" style="left:291px;top:364px;width:78px;text-align:center;font-size:13px;font-weight:bold;color:#000;transform:scaleX(0.945)">99</div>
<div class="t" style="left:369px;top:365px;width:131px;text-align:center;font-size:13px;color:#000;transform:scaleX(0.96)">99</div>
<div class="t" style="left:500px;top:365px;width:120px;text-align:center;font-size:13px;color:#000;transform:scaleX(0.96)">99</div>
<div class="t" style="left:621px;top:367px;width:183px;text-align:center;font-size:11.5px;color:#000;transform:scaleX(1.02)">1.0</div>
<div class="t" style="left:25px;top:384px;width:87px;text-align:center;font-size:13px;color:#fff;transform:scaleX(0.935)">Week 1</div>
<div class="t" style="left:113px;top:384px;width:83px;text-align:center;font-size:13px;font-weight:bold;color:#000;transform:scaleX(1.046)">04/01/2016</div>
<div class="t" style="left:195px;top:384px;width:96px;text-align:center;font-size:13px;font-weight:bold;color:#000;transform:scaleX(0.96)">John</div>
<div class="t" style="left:291px;top:384px;width:78px;text-align:center;font-size:13px;font-weight:bold;color:#000;transform:scaleX(0.945)">131</div>
<div class="t" style="left:369px;top:385px;width:131px;text-align:center;font-size:13px;color:#000;transform:scaleX(0.96)">131</div>
<div class="t" style="left:500px;top:385px;width:120px;text-align:center;font-size:13px;color:#000;transform:scaleX(0.96)">131</div>
<div class="t" style="left:621px;top:387px;width:183px;text-align:center;font-size:11.5px;color:#000;transform:scaleX(1.02)">1.0</div>
<div class="t" style="left:25px;top:404px;width:87px;text-align:center;font-size:13px;color:#fff;transform:scaleX(0.935)">Week 1</div>
<div class="t" style="left:113px;top:404px;width:83px;text-align:center;font-size:13px;font-weight:bold;color:#000;transform:scaleX(1.046)">04/01/2016</div>
<div class="t" style="left:195px;top:404px;width:96px;text-align:center;font-size:13px;font-weight:bold;color:#000;transform:scaleX(0.96)">Michael</div>
<div class="t" style="left:291px;top:404px;width:78px;text-align:center;font-size:13px;font-weight:bold;color:#000;transform:scaleX(0.945)">168</div>
<div class="t" style="left:369px;top:405px;width:131px;text-align:center;font-size:13px;color:#000;transform:scaleX(0.96)">168</div>
<div class="t" style="left:500px;top:405px;width:120px;text-align:center;font-size:13px;color:#000;transform:scaleX(0.96)">168</div>
<div class="t" style="left:621px;top:407px;width:183px;text-align:center;font-size:11.5px;color:#000;transform:scaleX(1.02)">1.0</div>
<div class="t" style="left:25px;top:424px;width:87px;text-align:center;font-size:13px;color:#fff;transform:scaleX(0.935)">Week 1</div>
<div class="t" style="left:113px;top:424px;width:83px;text-align:center;font-size:13px;font-weight:bold;color:#000;transform:scaleX(1.046)">04/01/2016</div>
<div class="t" style="left:195px;top:424px;width:96px;text-align:center;font-size:13px;font-weight:bold;color:#000;transform:scaleX(0.96)">Niall</div>
<div class="t" style="left:291px;top:424px;width:78px;text-align:center;font-size:13px;font-weight:bold;color:#000;transform:scaleX(0.945)">183</div>
<div class="t" style="left:369px;top:425px;width:131px;text-align:center;font-size:13px;color:#000;transform:scaleX(0.96)">183</div>
<div class="t" style="left:500px;top:425px;width:120px;text-align:center;font-size:13px;color:#000;transform:scaleX(0.96)">183</div>
<div class="t" style="left:621px;top:427px;width:183px;text-align:center;font-size:11.5px;color:#000;transform:scaleX(1.02)">1.0</div>
<div class="t" style="left:25px;top:444px;width:87px;text-align:center;font-size:13px;color:#fff;transform:scaleX(0.935)">Week 1</div>
<div class="t" style="left:113px;top:444px;width:83px;text-align:center;font-size:13px;font-weight:bold;color:#000;transform:scaleX(1.046)">04/01/2016</div>
<div class="t" style="left:195px;top:444px;width:96px;text-align:center;font-size:13px;font-weight:bold;color:#000;transform:scaleX(0.96)">Paul</div>
<div class="t" style="left:291px;top:444px;width:78px;text-align:center;font-size:13px;font-weight:bold;color:#000;transform:scaleX(0.945)">100</div>
<div class="t" style="left:369px;top:445px;width:131px;text-align:center;font-size:13px;color:#000;transform:scaleX(0.96)">100</div>
<div class="t" style="left:500px;top:445px;width:120px;text-align:center;font-size:13px;color:#000;transform:scaleX(0.96)">100</div>
<div class="t" style="left:621px;top:447px;width:183px;text-align:center;font-size:11.5px;color:#000;transform:scaleX(1.02)">1.0</div>
<div class="t" style="left:25px;top:464px;width:87px;text-align:center;font-size:13px;color:#fff;transform:scaleX(0.935)">Week 1</div>
<div class="t" style="left:113px;top:464px;width:83px;text-align:center;font-size:13px;font-weight:bold;color:#000;transform:scaleX(1.046)">04/01/2016</div>
<div class="t" style="left:195px;top:464px;width:96px;text-align:center;font-size:13px;font-weight:bold;color:#000;transform:scaleX(0.96)">Steven</div>
<div class="t" style="left:291px;top:464px;width:78px;text-align:center;font-size:13px;font-weight:bold;color:#000;transform:scaleX(0.945)">121</div>
<div class="t" style="left:369px;top:465px;width:131px;text-align:center;font-size:13px;color:#000;transform:scaleX(0.96)">121</div>
<div class="t" style="left:500px;top:465px;width:120px;text-align:center;font-size:13px;color:#000;transform:scaleX(0.96)">121</div>
<div class="t" style="left:621px;top:467px;width:183px;text-align:center;font-size:11.5px;color:#000;transform:scaleX(1.02)">1.0</div>
<div class="t" style="left:25px;top:484px;width:87px;text-align:center;font-size:13px;color:#fff;transform:scaleX(0.935)">Week 1</div>
<div class="t" style="left:113px;top:484px;width:83px;text-align:center;font-size:13px;font-weight:bold;color:#000;transform:scaleX(1.046)">04/01/2016</div>
<div class="t" style="left:195px;top:484px;width:96px;text-align:center;font-size:13px;font-weight:bold;color:#000;transform:scaleX(0.96)">Tom</div>
<div class="t" style="left:291px;top:484px;width:78px;text-align:center;font-size:13px;font-weight:bold;color:#000;transform:scaleX(0.945)">250</div>
<div class="t" style="left:369px;top:485px;width:131px;text-align:center;font-size:13px;color:#000;transform:scaleX(0.96)">250</div>
<div class="t" style="left:500px;top:485px;width:120px;text-align:center;font-size:13px;color:#000;transform:scaleX(0.96)">250</div>
<div class="t" style="left:621px;top:487px;width:183px;text-align:center;font-size:11.5px;color:#000;transform:scaleX(1.02)">1.0</div>
<div class="t" style="left:25px;top:504px;width:87px;text-align:center;font-size:13px;color:#fff;transform:scaleX(0.935)">Week 1</div>
<div class="t" style="left:113px;top:504px;width:83px;text-align:center;font-size:13px;font-weight:bold;color:#000;transform:scaleX(1.046)">05/01/2016</div>
<div class="t" style="left:195px;top:504px;width:96px;text-align:center;font-size:13px;font-weight:bold;color:#000;transform:scaleX(0.96)">Alan</div>
<div class="t" style="left:291px;top:504px;width:78px;text-align:center;font-size:13px;font-weight:bold;color:#000;transform:scaleX(0.945)">0</div>
<div class="t" style="left:369px;top:505px;width:131px;text-align:center;font-size:13px;color:#000;transform:scaleX(0.96)">168</div>
<div class="t" style="left:500px;top:505px;width:120px;text-align:center;font-size:13px;color:#000;transform:scaleX(0.96)">135</div>
<div class="t" style="left:621px;top:507px;width:183px;text-align:center;font-size:11.5px;color:#000;transform:scaleX(1.02)">0.8</div>
<div class="t" style="left:25px;top:524px;width:87px;text-align:center;font-size:13px;color:#fff;transform:scaleX(0.935)">Week 1</div>
<div class="t" style="left:113px;top:524px;width:83px;text-align:center;font-size:13px;font-weight:bold;color:#000;transform:scaleX(1.046)">05/01/2016</div>
<div class="t" style="left:195px;top:524px;width:96px;text-align:center;font-size:13px;font-weight:bold;color:#000;transform:scaleX(0.96)">Ben</div>
<div class="t" style="left:291px;top:524px;width:78px;text-align:center;font-size:13px;font-weight:bold;color:#000;transform:scaleX(0.945)">165</div>
<div class="t" style="left:369px;top:525px;width:131px;text-align:center;font-size:13px;color:#000;transform:scaleX(0.96)">68</div>
<div class="t" style="left:500px;top:525px;width:120px;text-align:center;font-size:13px;color:#000;transform:scaleX(0.96)">87</div>
<div class="t" style="left:621px;top:527px;width:183px;text-align:center;font-size:11.5px;color:#000;transform:scaleX(1.02)">1.3</div>
<div class="t" style="left:25px;top:544px;width:87px;text-align:center;font-size:13px;color:#fff;transform:scaleX(0.935)">Week 1</div>
<div class="t" style="left:113px;top:544px;width:83px;text-align:center;font-size:13px;font-weight:bold;color:#000;transform:scaleX(1.046)">05/01/2016</div>
<div class="t" style="left:195px;top:544px;width:96px;text-align:center;font-size:13px;font-weight:bold;color:#000;transform:scaleX(0.96)">David</div>
<div class="t" style="left:291px;top:544px;width:78px;text-align:center;font-size:13px;font-weight:bold;color:#000;transform:scaleX(0.945)">124</div>
<div class="t" style="left:369px;top:545px;width:131px;text-align:center;font-size:13px;color:#000;transform:scaleX(0.96)">182</div>
<div class="t" style="left:500px;top:545px;width:120px;text-align:center;font-size:13px;color:#000;transform:scaleX(0.96)">171</div>
<div class="t" style="left:621px;top:547px;width:183px;text-align:center;font-size:11.5px;color:#000;transform:scaleX(1.02)">0.9</div>
<div class="t" style="left:25px;top:564px;width:87px;text-align:center;font-size:13px;color:#fff;transform:scaleX(0.935)">Week 1</div>
<div class="t" style="left:113px;top:564px;width:83px;text-align:center;font-size:13px;font-weight:bold;color:#000;transform:scaleX(1.046)">05/01/2016</div>
<div class="t" style="left:195px;top:564px;width:96px;text-align:center;font-size:13px;font-weight:bold;color:#000;transform:scaleX(0.96)">Joe</div>
<div class="t" style="left:291px;top:564px;width:78px;text-align:center;font-size:13px;font-weight:bold;color:#000;transform:scaleX(0.945)">0</div>
<div class="t" style="left:369px;top:565px;width:131px;text-align:center;font-size:13px;color:#000;transform:scaleX(0.96)">92</div>
<div class="t" style="left:500px;top:565px;width:120px;text-align:center;font-size:13px;color:#000;transform:scaleX(0.96)">74</div>
<div class="t" style="left:621px;top:567px;width:183px;text-align:center;font-size:11.5px;color:#000;transform:scaleX(1.02)">0.8</div>
<div class="t" style="left:25px;top:584px;width:87px;text-align:center;font-size:13px;color:#fff;transform:scaleX(0.935)">Week 1</div>
<div class="t" style="left:113px;top:584px;width:83px;text-align:center;font-size:13px;font-weight:bold;color:#000;transform:scaleX(1.046)">05/01/2016</div>
<div class="t" style="left:195px;top:584px;width:96px;text-align:center;font-size:13px;font-weight:bold;color:#000;transform:scaleX(0.96)">John</div>
<div class="t" style="left:291px;top:584px;width:78px;text-align:center;font-size:13px;font-weight:bold;color:#000;transform:scaleX(0.945)">133</div>
<div class="t" style="left:369px;top:585px;width:131px;text-align:center;font-size:13px;color:#000;transform:scaleX(0.96)">131</div>
<div class="t" style="left:500px;top:585px;width:120px;text-align:center;font-size:13px;color:#000;transform:scaleX(0.96)">132</div>
<div class="t" style="left:621px;top:587px;width:183px;text-align:center;font-size:11.5px;color:#000;transform:scaleX(1.02)">1.0</div>
<div class="t" style="left:25px;top:604px;width:87px;text-align:center;font-size:13px;color:#fff;transform:scaleX(0.935)">Week 1</div>
<div class="t" style="left:113px;top:604px;width:83px;text-align:center;font-size:13px;font-weight:bold;color:#000;transform:scaleX(1.046)">05/01/2016</div>
<div class="t" style="left:195px;top:604px;width:96px;text-align:center;font-size:13px;font-weight:bold;color:#000;transform:scaleX(0.96)">Michael</div>
<div class="t" style="left:291px;top:604px;width:78px;text-align:center;font-size:13px;font-weight:bold;color:#000;transform:scaleX(0.945)">92</div>
<div class="t" style="left:369px;top:605px;width:131px;text-align:center;font-size:13px;color:#000;transform:scaleX(0.96)">163</div>
<div class="t" style="left:500px;top:605px;width:120px;text-align:center;font-size:13px;color:#000;transform:scaleX(0.96)">149</div>
<div class="t" style="left:621px;top:607px;width:183px;text-align:center;font-size:11.5px;color:#000;transform:scaleX(1.02)">0.9</div>
<div class="t" style="left:25px;top:624px;width:87px;text-align:center;font-size:13px;color:#fff;transform:scaleX(0.935)">Week 1</div>
<div class="t" style="left:113px;top:624px;width:83px;text-align:center;font-size:13px;font-weight:bold;color:#000;transform:scaleX(1.046)">05/01/2016</div>
<div class="t" style="left:195px;top:624px;width:96px;text-align:center;font-size:13px;font-weight:bold;color:#000;transform:scaleX(0.96)">Niall</div>
<div class="t" style="left:291px;top:624px;width:78px;text-align:center;font-size:13px;font-weight:bold;color:#000;transform:scaleX(0.945)">123</div>
<div class="t" style="left:369px;top:625px;width:131px;text-align:center;font-size:13px;color:#000;transform:scaleX(0.96)">179</div>
<div class="t" style="left:500px;top:625px;width:120px;text-align:center;font-size:13px;color:#000;transform:scaleX(0.96)">168</div>
<div class="t" style="left:621px;top:627px;width:183px;text-align:center;font-size:11.5px;color:#000;transform:scaleX(1.02)">0.9</div>
<div class="t" style="left:25px;top:644px;width:87px;text-align:center;font-size:13px;color:#fff;transform:scaleX(0.935)">Week 1</div>
<div class="t" style="left:113px;top:644px;width:83px;text-align:center;font-size:13px;font-weight:bold;color:#000;transform:scaleX(1.046)">05/01/2016</div>
<div class="t" style="left:195px;top:644px;width:96px;text-align:center;font-size:13px;font-weight:bold;color:#000;transform:scaleX(0.96)">Paul</div>
<div class="t" style="left:291px;top:644px;width:78px;text-align:center;font-size:13px;font-weight:bold;color:#000;transform:scaleX(0.945)">0</div>
<div class="t" style="left:369px;top:645px;width:131px;text-align:center;font-size:13px;color:#000;transform:scaleX(0.96)">93</div>
<div class="t" style="left:500px;top:645px;width:120px;text-align:center;font-size:13px;color:#000;transform:scaleX(0.96)">75</div>
<div class="t" style="left:621px;top:647px;width:183px;text-align:center;font-size:11.5px;color:#000;transform:scaleX(1.02)">0.8</div>
<div class="t" style="left:25px;top:664px;width:87px;text-align:center;font-size:13px;color:#fff;transform:scaleX(0.935)">Week 1</div>
<div class="t" style="left:113px;top:664px;width:83px;text-align:center;font-size:13px;font-weight:bold;color:#000;transform:scaleX(1.046)">05/01/2016</div>
<div class="t" style="left:195px;top:664px;width:96px;text-align:center;font-size:13px;font-weight:bold;color:#000;transform:scaleX(0.96)">Steven</div>
<div class="t" style="left:291px;top:664px;width:78px;text-align:center;font-size:13px;font-weight:bold;color:#000;transform:scaleX(0.945)">147</div>
<div class="t" style="left:369px;top:665px;width:131px;text-align:center;font-size:13px;color:#000;transform:scaleX(0.96)">123</div>
<div class="t" style="left:500px;top:665px;width:120px;text-align:center;font-size:13px;color:#000;transform:scaleX(0.96)">128</div>
<div class="t" style="left:621px;top:667px;width:183px;text-align:center;font-size:11.5px;color:#000;transform:scaleX(1.02)">1.0</div>
<div class="t" style="left:25px;top:684px;width:87px;text-align:center;font-size:13px;color:#fff;transform:scaleX(0.935)">Week 1</div>
<div class="t" style="left:113px;top:684px;width:83px;text-align:center;font-size:13px;font-weight:bold;color:#000;transform:scaleX(1.046)">05/01/2016</div>
<div class="t" style="left:195px;top:684px;width:96px;text-align:center;font-size:13px;font-weight:bold;color:#000;transform:scaleX(0.96)">Tom</div>
<div class="t" style="left:291px;top:684px;width:78px;text-align:center;font-size:13px;font-weight:bold;color:#000;transform:scaleX(0.945)">118</div>
<div class="t" style="left:369px;top:685px;width:131px;text-align:center;font-size:13px;color:#000;transform:scaleX(0.96)">241</div>
<div class="t" style="left:500px;top:685px;width:120px;text-align:center;font-size:13px;color:#000;transform:scaleX(0.96)">217</div>
<div class="t" style="left:621px;top:687px;width:183px;text-align:center;font-size:11.5px;color:#000;transform:scaleX(1.02)">0.9</div>
<div class="t" style="left:25px;top:704px;width:87px;text-align:center;font-size:13px;color:#fff;transform:scaleX(0.935)">Week 1</div>
<div class="t" style="left:113px;top:704px;width:83px;text-align:center;font-size:13px;font-weight:bold;color:#000;transform:scaleX(1.046)">06/01/2016</div>
<div class="t" style="left:195px;top:704px;width:96px;text-align:center;font-size:13px;font-weight:bold;color:#000;transform:scaleX(0.96)">Alan</div>
<div class="t" style="left:291px;top:704px;width:78px;text-align:center;font-size:13px;font-weight:bold;color:#000;transform:scaleX(0.945)">123</div>
<div class="t" style="left:369px;top:705px;width:131px;text-align:center;font-size:13px;color:#000;transform:scaleX(0.96)">165</div>
<div class="t" style="left:500px;top:705px;width:120px;text-align:center;font-size:13px;color:#000;transform:scaleX(0.96)">156</div>
<div class="t" style="left:621px;top:707px;width:183px;text-align:center;font-size:11.5px;color:#000;transform:scaleX(1.02)">1.0</div>
<div class="a" style="left:368px;top:499px;width:134px;height:23px;border:2px solid #217346"></div>
<div class="a" style="left:370px;top:501px;width:130px;height:19px;border:1px solid #ffffff"></div>
<div class="a" style="left:496px;top:517px;width:7px;height:7px;background:#217346;border:1px solid #fff"></div>
<svg class="a" style="left:500px;top:301px" width="6" height="6" viewBox="0 0 6 6"><path d="M0 0 H6 L0 6z" fill="#1e7a3c"/></svg>
<svg class="a" style="left:500px;top:681px" width="6" height="6" viewBox="0 0 6 6"><path d="M0 0 H6 L0 6z" fill="#1e7a3c"/></svg>
<svg class="a" style="left:500px;top:701px" width="6" height="6" viewBox="0 0 6 6"><path d="M0 0 H6 L0 6z" fill="#1e7a3c"/></svg>
<div class="a" style="left:968px;top:281px;width:103px;height:80px;border:1px solid #000;border-top:none"></div>
<div class="a" style="left:968px;top:300px;width:103px;height:1px;background:#000"></div>
<div class="a" style="left:968px;top:320px;width:103px;height:1px;background:#000"></div>
<div class="a" style="left:968px;top:340px;width:103px;height:1px;background:#000"></div>
<div class="t" style="left:969px;top:285px;width:74px;text-align:center;font-size:12.5px;color:#000">N - 7 Day</div>
<div class="t" style="left:1043px;top:285px;width:28px;text-align:center;font-size:12.5px;color:#000">7</div>
<div class="t" style="left:969px;top:305px;width:74px;text-align:center;font-size:12.5px;color:#000">N - 28 Day</div>
<div class="t" style="left:1043px;top:305px;width:28px;text-align:center;font-size:12.5px;color:#000">28</div>
<div class="t" style="left:969px;top:325px;width:74px;text-align:center;font-size:12.5px;color:#000">Aa - 7 Day</div>
<div class="t" style="left:1043px;top:325px;width:28px;text-align:center;font-size:12.5px;color:#000">0.3</div>
<div class="t" style="left:969px;top:345px;width:74px;text-align:center;font-size:12.5px;color:#000">Aa - 28 Day</div>
<div class="t" style="left:1043px;top:345px;width:28px;text-align:center;font-size:12.5px;color:#000">0.1</div>
<div class="t" style="left:1015.20px;top:361.90px;font-family:'Liberation Serif';font-size:24px;color:#1a1a1a;transform:scaleX(0.7333);transform-origin:0 0">λ</div>
<div class="t" style="left:1039.51px;top:361.90px;font-family:'Liberation Serif';font-size:24px;color:#1a1a1a;transform:scaleX(1.1917);transform-origin:0 0">=</div>
<div class="t" style="left:1061.94px;top:361.90px;font-family:'Liberation Serif';font-size:24px;color:#1a1a1a;transform:scaleX(0.9600);transform-origin:0 0">2</div>
<div class="t" style="left:1073.50px;top:361.90px;font-family:'Liberation Serif';font-size:24px;color:#1a1a1a;transform:scaleX(1.2143);transform-origin:0 0">/</div>
<div class="t" style="left:1084.80px;top:361.90px;font-family:'Liberation Serif';font-size:24px;color:#1a1a1a;transform:scaleX(0.8000);transform-origin:0 0">(</div>
<div class="t" style="left:1091.80px;top:361.90px;font-family:'Liberation Serif';font-size:24px;color:#1a1a1a;transform:scaleX(0.9353);transform-origin:0 0">N</div>
<div class="t" style="left:1112.83px;top:361.90px;font-family:'Liberation Serif';font-size:24px;color:#1a1a1a;transform:scaleX(1.1667);transform-origin:0 0">+</div>
<div class="t" style="left:1135.44px;top:361.90px;font-family:'Liberation Serif';font-size:24px;color:#1a1a1a;transform:scaleX(0.7778);transform-origin:0 0">1</div>
<div class="t" style="left:1145.00px;top:361.90px;font-family:'Liberation Serif';font-size:24px;color:#1a1a1a;transform:scaleX(0.9143);transform-origin:0 0">)</div>
<div class="t" style="left:1025.40px;top:372.10px;font-family:'Liberation Serif';font-size:16px;color:#1a1a1a;transform:scaleX(0.9714);transform-origin:0 0">a</div>
<div class="t" style="left:828.10px;top:395.20px;font-family:'Liberation Serif';font-size:24px;color:#1a1a1a;transform:scaleX(0.7671);transform-origin:0 0">EWMA</div>
<div class="t" style="left:924.98px;top:395.20px;font-family:'Liberation Serif';font-size:24px;color:#1a1a1a;transform:scaleX(1.0250);transform-origin:0 0">=</div>
<div class="t" style="left:950.40px;top:395.20px;font-family:'Liberation Serif';font-size:24px;color:#1a1a1a;transform:scaleX(0.8030);transform-origin:0 0">Load</div>
<div class="t" style="left:1027.55px;top:395.20px;font-family:'Liberation Serif';font-size:24px;color:#1a1a1a;transform:scaleX(0.8455);transform-origin:0 0">×</div>
<div class="t" style="left:1050.40px;top:395.20px;font-family:'Liberation Serif';font-size:24px;color:#1a1a1a;transform:scaleX(0.7167);transform-origin:0 0">λ</div>
<div class="t" style="left:1070.80px;top:395.20px;font-family:'Liberation Serif';font-size:24px;color:#1a1a1a;transform:scaleX(1.0000);transform-origin:0 0">+</div>
<div class="t" style="left:1089.74px;top:395.20px;font-family:'Liberation Serif';font-size:24px;color:#1a1a1a;transform:scaleX(0.7571);transform-origin:0 0">(</div>
<div class="t" style="left:1096.86px;top:395.20px;font-family:'Liberation Serif';font-size:24px;color:#1a1a1a;transform:scaleX(0.7429);transform-origin:0 0">(</div>
<div class="t" style="left:1104.06px;top:395.20px;font-family:'Liberation Serif';font-size:24px;color:#1a1a1a;transform:scaleX(0.7222);transform-origin:0 0">1</div>
<div class="t" style="left:1119.08px;top:395.20px;font-family:'Liberation Serif';font-size:24px;color:#1a1a1a;transform:scaleX(0.9167);transform-origin:0 0">−</div>
<div class="t" style="left:1142.80px;top:395.20px;font-family:'Liberation Serif';font-size:24px;color:#1a1a1a;transform:scaleX(0.7333);transform-origin:0 0">λ</div>
<div class="t" style="left:1159.50px;top:395.20px;font-family:'Liberation Serif';font-size:24px;color:#1a1a1a;transform:scaleX(0.7571);transform-origin:0 0">)</div>
<div class="t" style="left:1171.83px;top:395.20px;font-family:'Liberation Serif';font-size:24px;color:#1a1a1a;transform:scaleX(0.8727);transform-origin:0 0">×</div>
<div class="t" style="left:1189.80px;top:395.20px;font-family:'Liberation Serif';font-size:24px;color:#1a1a1a;transform:scaleX(0.7632);transform-origin:0 0">EWMA</div>
<div class="t" style="left:1302.50px;top:395.20px;font-family:'Liberation Serif';font-size:24px;color:#1a1a1a;transform:scaleX(0.7571);transform-origin:0 0">)</div>
<div class="t" style="left:887.40px;top:404.80px;font-family:'Liberation Serif';font-size:16px;color:#1a1a1a;transform:scaleX(0.8636);transform-origin:0 0">today</div>
<div class="t" style="left:990.50px;top:404.80px;font-family:'Liberation Serif';font-size:16px;color:#1a1a1a;transform:scaleX(0.8186);transform-origin:0 0">today</div>
<div class="t" style="left:1059.10px;top:404.80px;font-family:'Liberation Serif';font-size:16px;color:#1a1a1a;transform:scaleX(0.9429);transform-origin:0 0">a</div>
<div class="t" style="left:1152.00px;top:404.80px;font-family:'Liberation Serif';font-size:16px;color:#1a1a1a;transform:scaleX(0.8857);transform-origin:0 0">a</div>
<div class="t" style="left:1248.60px;top:404.80px;font-family:'Liberation Serif';font-size:16px;color:#1a1a1a;transform:scaleX(0.8645);transform-origin:0 0">yesterday</div>
<div class="a" style="left:1331px;top:280px;width:14px;height:437px;background:#a6a6a6"></div>
<div class="a" style="left:1329px;top:280px;width:2px;height:437px;background:#000"></div>
<div class="a" style="left:1331px;top:299px;width:13px;height:2px;background:#000"></div>
<div class="a" style="left:1331px;top:319px;width:13px;height:2px;background:#000"></div>
<div class="a" style="left:1331px;top:339px;width:13px;height:2px;background:#cfcfcf"></div>
<div class="a" style="left:1331px;top:321px;width:14px;height:18px;overflow:hidden"><div class="t" style="left:3px;top:5px;font-size:12px;color:#eef2f8">04</div></div>
<div class="a" style="left:1331px;top:359px;width:13px;height:2px;background:#cfcfcf"></div>
<div class="a" style="left:1331px;top:341px;width:14px;height:18px;overflow:hidden"><div class="t" style="left:3px;top:5px;font-size:12px;color:#eef2f8">11</div></div>
<div class="a" style="left:1331px;top:379px;width:13px;height:2px;background:#cfcfcf"></div>
<div class="a" style="left:1331px;top:361px;width:14px;height:18px;overflow:hidden"><div class="t" style="left:3px;top:5px;font-size:12px;color:#eef2f8">18</div></div>
<div class="a" style="left:1331px;top:399px;width:13px;height:2px;background:#cfcfcf"></div>
<div class="a" style="left:1331px;top:381px;width:14px;height:18px;overflow:hidden"><div class="t" style="left:3px;top:5px;font-size:12px;color:#eef2f8">25</div></div>
<div class="a" style="left:1331px;top:419px;width:13px;height:2px;background:#cfcfcf"></div>
<div class="a" style="left:1331px;top:401px;width:14px;height:18px;overflow:hidden"><div class="t" style="left:3px;top:5px;font-size:12px;color:#eef2f8">01</div></div>
<div class="a" style="left:1331px;top:439px;width:13px;height:2px;background:#cfcfcf"></div>
<div class="a" style="left:1331px;top:421px;width:14px;height:18px;overflow:hidden"><div class="t" style="left:3px;top:5px;font-size:12px;color:#eef2f8">08</div></div>
<div class="a" style="left:1331px;top:459px;width:13px;height:2px;background:#cfcfcf"></div>
<div class="a" style="left:1331px;top:441px;width:14px;height:18px;overflow:hidden"><div class="t" style="left:3px;top:5px;font-size:12px;color:#eef2f8">15</div></div>
<div class="a" style="left:1331px;top:479px;width:13px;height:2px;background:#cfcfcf"></div>
<div class="a" style="left:1331px;top:461px;width:14px;height:18px;overflow:hidden"><div class="t" style="left:3px;top:5px;font-size:12px;color:#eef2f8">22</div></div>
<div class="a" style="left:1331px;top:499px;width:13px;height:2px;background:#cfcfcf"></div>
<div class="a" style="left:1331px;top:481px;width:14px;height:18px;overflow:hidden"><div class="t" style="left:3px;top:5px;font-size:12px;color:#eef2f8">29</div></div>
<div class="a" style="left:1331px;top:519px;width:13px;height:2px;background:#cfcfcf"></div>
<div class="a" style="left:1331px;top:501px;width:14px;height:18px;overflow:hidden"><div class="t" style="left:3px;top:5px;font-size:12px;color:#eef2f8">07</div></div>
<div class="a" style="left:1331px;top:539px;width:13px;height:2px;background:#cfcfcf"></div>
<div class="a" style="left:1331px;top:521px;width:14px;height:18px;overflow:hidden"><div class="t" style="left:3px;top:5px;font-size:12px;color:#eef2f8">14</div></div>
<div class="a" style="left:1331px;top:559px;width:13px;height:2px;background:#cfcfcf"></div>
<div class="a" style="left:1331px;top:541px;width:14px;height:18px;overflow:hidden"><div class="t" style="left:3px;top:5px;font-size:12px;color:#eef2f8">21</div></div>
<div class="a" style="left:1331px;top:579px;width:13px;height:2px;background:#cfcfcf"></div>
<div class="a" style="left:1331px;top:561px;width:14px;height:18px;overflow:hidden"><div class="t" style="left:3px;top:5px;font-size:12px;color:#eef2f8">28</div></div>
<div class="a" style="left:1331px;top:599px;width:13px;height:2px;background:#cfcfcf"></div>
<div class="a" style="left:1331px;top:581px;width:14px;height:18px;overflow:hidden"><div class="t" style="left:3px;top:5px;font-size:12px;color:#eef2f8">04</div></div>
<div class="a" style="left:1331px;top:619px;width:13px;height:2px;background:#cfcfcf"></div>
<div class="a" style="left:1331px;top:601px;width:14px;height:18px;overflow:hidden"><div class="t" style="left:3px;top:5px;font-size:12px;color:#eef2f8">11</div></div>
<div class="a" style="left:1331px;top:639px;width:13px;height:2px;background:#cfcfcf"></div>
<div class="a" style="left:1331px;top:621px;width:14px;height:18px;overflow:hidden"><div class="t" style="left:3px;top:5px;font-size:12px;color:#eef2f8">18</div></div>
<div class="a" style="left:1331px;top:659px;width:13px;height:2px;background:#cfcfcf"></div>
<div class="a" style="left:1331px;top:641px;width:14px;height:18px;overflow:hidden"><div class="t" style="left:3px;top:5px;font-size:12px;color:#eef2f8">25</div></div>
<div class="a" style="left:1331px;top:679px;width:13px;height:2px;background:#cfcfcf"></div>
<div class="a" style="left:1331px;top:661px;width:14px;height:18px;overflow:hidden"><div class="t" style="left:3px;top:5px;font-size:12px;color:#eef2f8">02</div></div>
<div class="a" style="left:1331px;top:699px;width:13px;height:2px;background:#cfcfcf"></div>
<div class="a" style="left:1331px;top:681px;width:14px;height:18px;overflow:hidden"><div class="t" style="left:3px;top:5px;font-size:12px;color:#eef2f8">09</div></div>
<div class="a" style="left:1331px;top:719px;width:13px;height:2px;background:#cfcfcf"></div>
<div class="a" style="left:1331px;top:701px;width:14px;height:18px;overflow:hidden"><div class="t" style="left:3px;top:5px;font-size:12px;color:#eef2f8">16</div></div>
<div class="a" style="left:1345px;top:264px;width:21px;height:453px;background:#262626"></div>
<div class="a" style="left:1348px;top:281px;width:14px;height:421px;background:#303030"></div>
<div class="a" style="left:1349px;top:267px;width:13px;height:13px;background:#3c3c3c"></div>
<svg class="a" style="left:1349px;top:267px" width="13" height="13" viewBox="0 0 13 13"><path d="M2.5 8.5 H10.5 L6.5 4.5z" fill="#8a8a8a"/></svg>
<div class="a" style="left:1349px;top:282px;width:13px;height:27px;background:#474747"></div>
<div class="a" style="left:1349px;top:703px;width:13px;height:13px;background:#3c3c3c"></div>
<svg class="a" style="left:1349px;top:703px" width="13" height="13" viewBox="0 0 13 13"><path d="M2.5 4.5 H10.5 L6.5 8.5z" fill="#8a8a8a"/></svg>
<div class="a" style="left:0;top:717px;width:1366px;height:29px;background:#242424"></div>
<div class="a" style="left:0;top:717px;width:1345px;height:1px;background:#6a6a6a"></div>
<svg class="a" style="left:26px;top:726px" width="8" height="10" viewBox="0 0 8 10"><path d="M6 1 L2 5 L6 9z" fill="#9a9a9a"/></svg>
<svg class="a" style="left:54px;top:726px" width="8" height="10" viewBox="0 0 8 10"><path d="M2 1 L6 5 L2 9z" fill="#9a9a9a"/></svg>
<div class="a" style="left:100px;top:717px;width:100px;height:25px;background:linear-gradient(#ffffff 10%,#fbdf9f);border-left:1px solid #fff;border-right:1px solid #fff;border-bottom:2px solid #217346"></div>
<div class="t" style="left:100px;top:724px;width:100px;text-align:center;font-size:13px;font-weight:bold;color:#217346;transform:scaleX(0.97)">Calculations</div>
<div class="a" style="left:201px;top:720px;width:58px;height:22px;background:#3a3a3a"></div>
<div class="t" style="left:201px;top:725px;width:58px;text-align:center;font-size:13px;color:#f0f0f0;transform:scaleX(0.95)">Charts</div>
<div class="a" style="left:261px;top:720px;width:1px;height:22px;background:#6a6a6a"></div>
<svg class="a" style="left:294px;top:722px" width="18" height="18" viewBox="0 0 18 18"><circle cx="9" cy="9" r="7.8" fill="none" stroke="#f0f0f0" stroke-width="1.3"/><path d="M9 5 V13 M5 9 H13" stroke="#f0f0f0" stroke-width="1.8"/></svg>
<div class="a" style="left:1155px;top:725px;width:2px;height:2px;background:#e0e0e0"></div>
<div class="a" style="left:1155px;top:730px;width:2px;height:2px;background:#e0e0e0"></div>
<div class="a" style="left:1155px;top:735px;width:2px;height:2px;background:#e0e0e0"></div>
<div class="a" style="left:1172px;top:724px;width:174px;height:15px;background:#2e2e2e"></div>
<div class="a" style="left:1172px;top:724px;width:14px;height:15px;background:#3a3a3a"></div>
<svg class="a" style="left:1172px;top:724px" width="14" height="15" viewBox="0 0 14 15"><path d="M9 4 L5 7.5 L9 11z" fill="#8a8a8a"/></svg>
<div class="a" style="left:1188px;top:724px;width:128px;height:15px;background:#5a5a5a"></div>
<div class="a" style="left:1332px;top:724px;width:14px;height:15px;background:#3a3a3a"></div>
<svg class="a" style="left:1332px;top:724px" width="14" height="15" viewBox="0 0 14 15"><path d="M5 4 L9 7.5 L5 11z" fill="#8a8a8a"/></svg>
<div class="a" style="left:0;top:745px;width:1366px;height:1px;background:#474747"></div>
<div class="a" style="left:0;top:746px;width:1366px;height:20px;background:#2b2b2b"></div>
<div class="a" style="left:0;top:766px;width:1366px;height:2px;background:#0a0a0a"></div>
<div class="a" style="left:148px;top:766px;width:32px;height:2px;background:#4a4a4a"></div>
<div class="t" style="left:7px;top:751px;font-size:11.5px;color:#e8e8e8;transform:scaleX(0.95);transform-origin:0 0">Ready</div>
<div class="t" style="left:54px;top:751px;font-size:11.5px;color:#e8e8e8;transform:scaleX(1.02);transform-origin:0 0">Filter Mode</div>
<svg class="a" style="left:132px;top:748px" width="16" height="16" viewBox="0 0 16 16"><circle cx="4" cy="4" r="3.2" fill="#d8d8d8"/><path d="M8 2.5 H14 V14 H3 V8" fill="none" stroke="#e8e8e8" stroke-width="1.3"/><rect x="8.5" y="2.5" width="5" height="2" fill="#e8e8e8"/><path d="M5.5 9.5 H7 M8 9.5 H9.5 M10.5 9.5 H12 M5.5 11.5 H7 M8 11.5 H9.5 M10.5 11.5 H12 M8 7.5 H9.5 M10.5 7.5 H12" stroke="#e8e8e8" stroke-width="1.1"/></svg>
<div class="a" style="left:1080px;top:746px;width:38px;height:20px;background:#3e3e3e"></div>
<svg class="a" style="left:1091px;top:748px" width="15" height="15" viewBox="0 0 15 15"><rect x="1" y="1" width="13" height="13" fill="none" stroke="#e8e8e8"/><path d="M5.3 1 V14 M9.6 1 V14 M1 5.3 H14 M1 9.6 H14" stroke="#e8e8e8"/></svg>
<svg class="a" style="left:1129px;top:748px" width="15" height="15" viewBox="0 0 15 15"><rect x="1" y="1" width="13" height="13" fill="none" stroke="#e8e8e8"/><rect x="3.5" y="3.5" width="8" height="8" fill="none" stroke="#e8e8e8"/><path d="M5 6 H10 M5 8 H10" stroke="#e8e8e8"/></svg>
<svg class="a" style="left:1167px;top:748px" width="15" height="15" viewBox="0 0 15 15"><rect x="1" y="1" width="13" height="13" fill="none" stroke="#e8e8e8"/><rect x="2" y="2" width="4" height="6" fill="#e8e8e8"/><rect x="7" y="2" width="3" height="6" fill="#e8e8e8"/></svg>
<div class="a" style="left:1200px;top:755px;width:7px;height:2px;background:#f0f0f0"></div>
<div class="a" style="left:1209px;top:755px;width:100px;height:1px;background:#e0e0e0"></div>
<div class="a" style="left:1252px;top:749px;width:4px;height:13px;background:#f0f0f0"></div>
<div class="a" style="left:1260px;top:752px;width:1px;height:7px;background:#e0e0e0"></div>
<div class="a" style="left:1313px;top:755px;width:8px;height:2px;background:#f0f0f0"></div>
<div class="a" style="left:1316px;top:752px;width:2px;height:8px;background:#f0f0f0"></div>
<div class="t" style="left:1337px;top:751px;font-size:11.5px;color:#e8e8e8;transform:scaleX(0.92);transform-origin:0 0">90%</div>
</body></html>
